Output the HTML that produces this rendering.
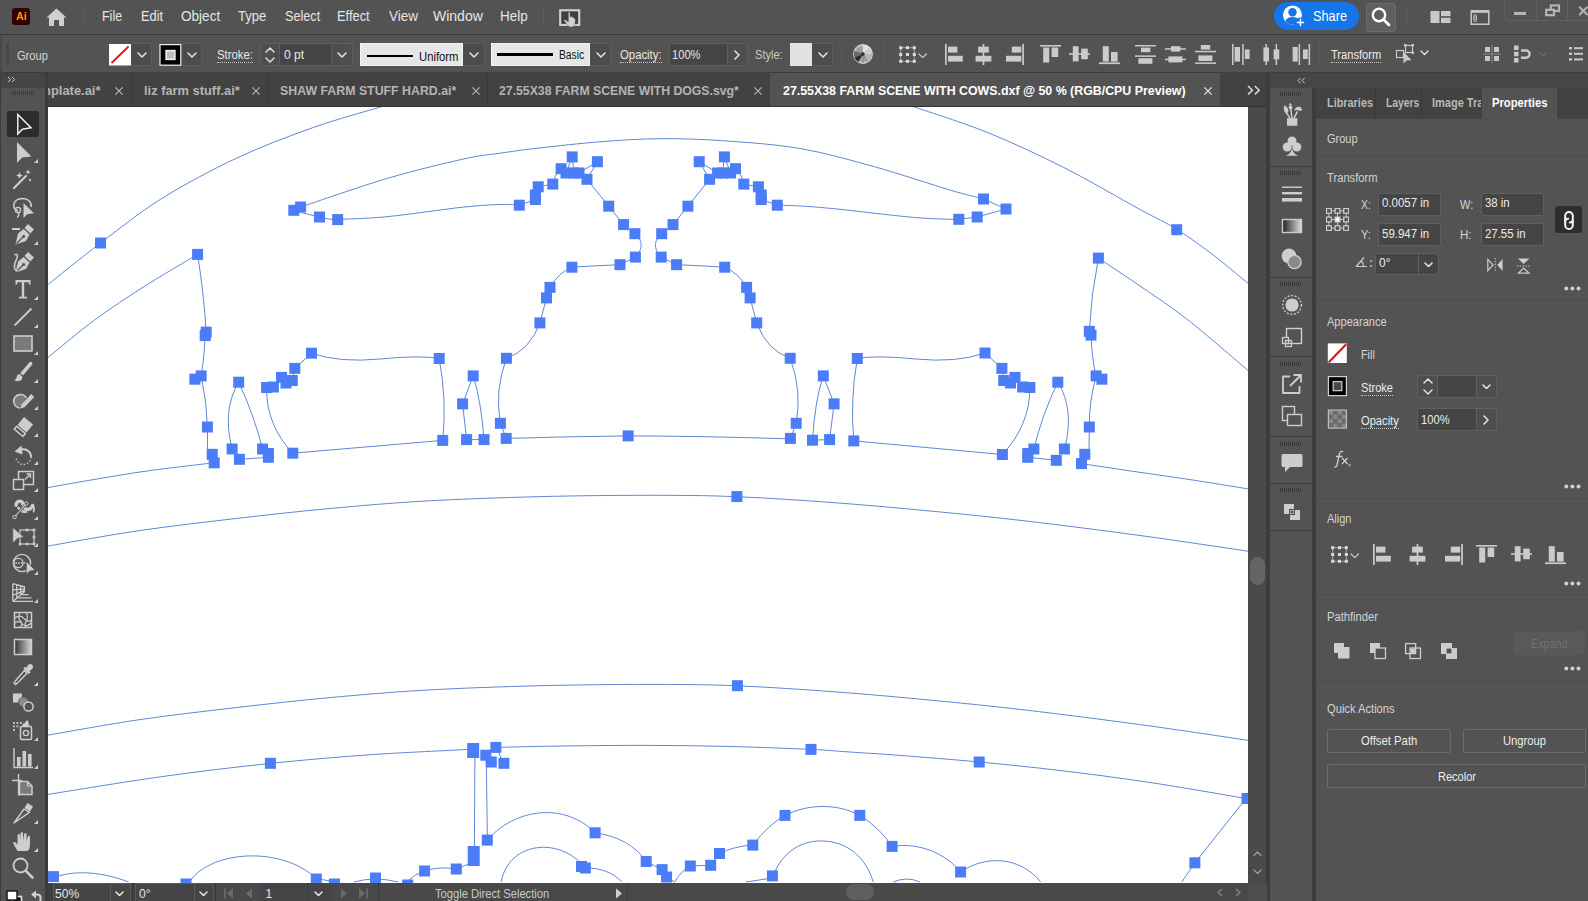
<!DOCTYPE html><html><head><meta charset="utf-8"><title>Illustrator</title><style>html,body{margin:0;padding:0;background:#535353;}
body{width:1588px;height:901px;overflow:hidden;position:relative;font-family:"Liberation Sans",sans-serif;}
.a{position:absolute;display:block;}
.t{white-space:nowrap;line-height:16px;}
</style></head><body><div class="a" style="left:48px;top:107px;width:1200px;height:776px;background:#ffffff;"></div><svg class="a" style="left:48px;top:107px" width="1200" height="776" viewBox="48 107 1200 776"><g fill="none" stroke="#5f86d6" stroke-width="1"><path d="M40.0,291.0 C41.3,289.9 37.9,292.5 48.0,284.5 C58.1,276.5 81.6,257.3 100.5,243.0 C119.4,228.7 138.6,213.0 161.3,198.8 C184.0,184.6 211.7,169.8 236.9,158.0 C262.1,146.2 288.5,136.3 312.4,127.8 C336.3,119.3 365.8,111.4 380.4,107.0 C395.0,102.6 396.7,102.4 400.0,101.5"/><path d="M895.0,101.0 C898.2,102.0 898.8,101.7 914.3,107.0 C929.8,112.3 963.1,122.6 988.0,132.7 C1012.9,142.8 1038.4,154.7 1063.6,167.4 C1088.8,180.1 1120.2,198.7 1139.1,209.0 C1158.0,219.3 1164.3,221.5 1176.9,229.4 C1189.5,237.3 1202.9,247.2 1214.7,256.2 C1226.5,265.2 1241.1,277.7 1248.0,283.3 C1254.9,288.9 1254.7,288.9 1256.0,290.0"/><path d="M40.0,364.5 C41.3,363.3 38.9,364.9 48.0,357.5 C57.1,350.1 78.4,331.9 94.6,320.0 C110.8,308.1 127.8,296.9 145.0,286.0 C162.2,275.1 188.8,259.7 197.6,254.4"/><path d="M1098.4,258.1 C1105.8,263.1 1128.1,277.7 1143.0,288.0 C1157.9,298.3 1170.5,306.3 1188.0,320.0 C1205.5,333.7 1236.7,360.8 1248.0,370.4 C1259.3,380.0 1254.7,376.3 1256.0,377.5"/><path d="M300.4,207.1 C315.0,202.3 360.8,186.2 388.0,178.2 C415.2,170.2 444.9,163.2 463.6,159.0 C482.3,154.8 487.4,155.0 500.0,153.2 C512.6,151.4 522.4,149.9 539.1,148.0 C555.8,146.1 579.9,143.4 600.0,141.8 C620.1,140.2 639.4,138.9 660.0,138.7 C680.6,138.5 700.3,139.2 723.6,140.8 C746.9,142.4 774.8,144.2 800.0,148.5 C825.2,152.8 849.7,159.9 874.7,166.8 C899.7,173.7 932.1,184.8 950.2,190.1 C968.3,195.4 977.8,197.4 983.3,198.9 L1006,209 L977.2,217 L958.8,219.3"/><path d="M293.8,210.3 L300.6,207"/><path d="M293.8,210.3 Q310,215 319.5,217 Q330,220 337.7,219.6  C346.2,218.9 367.0,218.7 388.0,216.6 C409.0,214.5 444.7,209.1 463.6,207.1 C482.5,205.1 492.0,204.8 501.3,204.5 C510.6,204.2 516.3,205.1 519.3,205.2"/><path d="M958.5,219.6 C950.8,219.2 932.7,219.1 912.4,217.3 C892.1,215.5 855.6,210.9 836.9,209.0 C818.2,207.1 809.9,206.6 800.0,206.0 C790.1,205.4 781.3,205.3 777.6,205.2"/><path d="M519.3,205.2 L535.4,199.5 L538.2,186.8 L552.8,184.1 Q555.29,172.7 561.1,168.7 L566,173 L572.2,156.9 L574,173 L579,173 L597.4,161.7 L587,179.3 L579,173 M587,179.3 L608.7,206.2 L623.6,224.6 L634.9,233.7 C642.9,240.7 643.4,248.10000000000002 635.4,257.1 L620,264.7 Q595.95,265.7 571.9,267.2 Q557.9,273.2 550,287.4 L546.5,297.9 L539.9,322.9 Q529.9,350.3 506.4,358.3 Q494.4,390.8 500.4,423.3 L506.2,438.4"/><path d="M777.3,205.2 L761.1999999999999,199.5 L758.3999999999999,186.8 L743.8,184.1 Q741.31,172.7 735.4999999999999,168.7 L730.5999999999999,173 L724.3999999999999,156.9 L722.5999999999999,173 L717.5999999999999,173 L699.1999999999999,161.7 L709.5999999999999,179.3 L717.5999999999999,173 M709.5999999999999,179.3 L687.8999999999999,206.2 L672.9999999999999,224.6 L661.6999999999999,233.7 C653.6999999999999,240.7 653.1999999999999,248.10000000000002 661.1999999999999,257.1 L676.5999999999999,264.7 Q700.6499999999999,265.7 724.6999999999999,267.2 Q738.6999999999999,273.2 746.5999999999999,287.4 L750.0999999999999,297.9 L756.6999999999999,322.9 Q766.6999999999999,350.3 790.1999999999999,358.3 Q802.1999999999999,390.8 796.1999999999999,423.3 L790.3999999999999,438.4"/><path d="M506.2,438.4 Q570,436.5 628.1,435.9 Q700,436 790.6,438.9"/><path d="M473.2,375.9 L462.6,403.9 L466.6,439.6 L484,439.6 Q481,400 473.2,375.9"/><path d="M823.3,375.9 L834.1,403.9 L829.6,439.6 L812.5,440.2 Q815,400 823.3,375.9"/><path d="M197.6,254.4 Q204,295 206.2,332.1 L205.2,335.6 Q204,360 201.1,375.9 L194.9,379.2 M201.1,375.9 Q207,402 207.4,427 L207.6,452 L212.2,454.3 L214.2,462.8"/><path d="M40.0,489.0 C41.3,488.8 31.3,490.3 48.0,487.5 C64.7,484.7 112.3,476.1 140.0,472.0 C167.7,467.9 201.8,464.3 214.2,462.8"/><path d="M238.7,382.2 Q222,410 232.1,449 L239.4,459.3 L268.4,457.3 L268.4,453.5 L262.6,449 Q254,415 238.7,382.2"/><path d="M266.6,387.5 Q266,425 292.8,453.2 L442.7,440.4 Q447,400 439.2,358.5 Q420,355 380,359 Q340,363 311.5,353.2 L294.8,368.4 L292.3,380.5 L286,383 L281.5,377.4 L273.4,387 L266.6,387.5"/><path d="M1098.4,258.1 Q1091,295 1089.3,331.3 L1091,335.1 Q1092,360 1096.1,375.9 L1101.9,379.2 M1096.1,375.9 Q1089,402 1089.3,427 L1089,452 L1084.8,454.3 L1081.5,463.6"/><path d="M1081.5,463.6 C1088.6,464.7 1106.6,467.4 1124.0,470.0 C1141.4,472.6 1165.3,475.9 1186.0,479.0 C1206.7,482.1 1236.3,487.0 1248.0,488.9 C1259.7,490.8 1254.7,490.1 1256.0,490.3"/><path d="M1057.8,382.2 Q1075,410 1064.4,449 M1057.8,382.2 Q1042,415 1033.9,449 L1027.8,453.5 L1027.8,457.3 L1056.3,460.3"/><path d="M1029.9,387.5 Q1030,425 1002.4,454.5 L853.8,440.9 Q850,400 857.3,358.5 Q876,355 916,359 Q956,363 985,353 L1001.9,368.4 L1003.7,380.5 L1010.5,383 L1015,377.4 L1022.6,387 L1029.9,387.5"/><path d="M40.0,547.5 C41.3,547.2 31.3,548.8 48.0,546.0 C64.7,543.2 108.5,535.1 140.0,530.5 C171.5,525.9 205.3,522.1 237.0,518.4 C268.7,514.7 298.5,511.4 330.0,508.5 C361.5,505.6 391.0,503.0 426.0,501.0 C461.0,499.0 503.0,497.6 540.0,496.6 C577.0,495.7 615.2,495.3 648.0,495.3 C680.8,495.3 705.5,495.4 737.0,496.7 C768.5,498.0 804.8,500.5 837.0,502.9 C869.2,505.3 898.5,508.0 930.0,511.0 C961.5,514.0 991.0,516.9 1026.0,521.0 C1061.0,525.1 1103.0,530.5 1140.0,535.5 C1177.0,540.5 1228.7,548.4 1248.0,551.2 C1267.3,554.0 1254.7,552.3 1256.0,552.5"/><path d="M40.0,736.6 C41.3,736.4 31.3,737.9 48.0,735.1 C64.7,732.3 108.5,724.2 140.0,719.6 C171.5,715.0 205.3,711.2 237.0,707.5 C268.7,703.8 298.5,700.5 330.0,697.6 C361.5,694.7 391.0,692.1 426.0,690.1 C461.0,688.1 503.0,686.7 540.0,685.7 C577.0,684.8 615.2,684.4 648.0,684.4 C680.8,684.4 705.5,684.5 737.0,685.8 C768.5,687.1 804.8,689.6 837.0,692.0 C869.2,694.4 898.5,697.1 930.0,700.1 C961.5,703.1 991.0,706.0 1026.0,710.1 C1061.0,714.2 1103.0,719.6 1140.0,724.6 C1177.0,729.6 1228.7,737.5 1248.0,740.3 C1267.3,743.1 1254.7,741.4 1256.0,741.6"/><path d="M40.0,795.8 C41.3,795.6 27.8,797.6 48.0,794.4 C68.2,791.2 124.2,781.9 161.3,776.7 C198.4,771.5 235.9,767.0 270.5,763.4 C305.1,759.8 336.3,757.1 369.1,754.8 C401.9,752.5 450.9,750.4 467.3,749.5"/><path d="M495.9,747.4 C508.2,747.1 544.4,746.2 570.0,745.9 C595.6,745.6 622.8,745.3 649.5,745.4 C676.2,745.5 703.1,745.8 730.0,746.5 C756.9,747.2 791.3,748.5 811.0,749.4 C830.7,750.3 833.2,750.9 848.0,751.9 C862.8,752.9 878.1,753.7 900.0,755.4 C921.9,757.1 952.5,759.5 979.2,762.0 C1005.9,764.5 1031.5,767.1 1060.0,770.5 C1088.5,773.9 1119.0,777.8 1150.0,782.5 C1181.0,787.2 1228.3,795.5 1246.0,798.5 C1263.7,801.5 1254.3,800.0 1256.0,800.3"/><path d="M474.9,758 L474.4,846 M486.3,760.8 L487.3,835 M495.9,747.4 L503.9,763.3"/><path d="M59,876 C75,871 100,871 128.6,882"/><path d="M190,881 C212,850 282,846 316.3,878.6 L334.4,881.7"/><path d="M354,882 Q375,876 398,882"/><path d="M407.7,881 Q415,874 424.6,871 Q440,866 456.3,869 L473.7,862"/><path d="M487.3,840.1 C515,808 565,802 595.1,832.8 C618,836 636,846 646.2,861.5 L662.1,869.6 L666.6,877 L674.7,882"/><path d="M501,882 C506,858 524,847.5 543.7,847.2 C560,847.5 575,855 585.3,868 C600,867.5 614,873 621.8,882"/><path d="M674.7,882 Q680,872 690.3,866 L710.7,865.3 L719.5,853.5 Q735,846 752.8,845.1 Q768,825 785,815.4 C808,803.5 838,803.5 859.8,815.4 Q880,828 892.1,846.4 C920,842 946,854 960.6,872 C985,855 1020,856 1040.7,882"/><path d="M746,882 L772.4,878 C780,855 798,841 820.8,840.9 C848,841 866,858 873.2,882"/><path d="M893.3,882 Q907,876 919.8,882"/><path d="M1246,798.5 L1194.9,862.8 L1181.8,882"/></g><g fill="#4a7df7"><rect x="95.0" y="237.5" width="11" height="11"/><rect x="1171.2" y="224.2" width="11" height="11"/><rect x="192.1" y="248.9" width="11" height="11"/><rect x="1092.9" y="252.6" width="11" height="11"/><rect x="288.3" y="204.8" width="11" height="11"/><rect x="295.1" y="201.5" width="11" height="11"/><rect x="314.0" y="211.5" width="11" height="11"/><rect x="332.2" y="214.1" width="11" height="11"/><rect x="978.0" y="193.5" width="11" height="11"/><rect x="1000.5" y="203.5" width="11" height="11"/><rect x="971.7" y="211.5" width="11" height="11"/><rect x="953.3" y="213.8" width="11" height="11"/><rect x="513.8" y="199.7" width="11" height="11"/><rect x="529.9" y="194.0" width="11" height="11"/><rect x="529.9" y="189.5" width="11" height="11"/><rect x="532.7" y="181.3" width="11" height="11"/><rect x="547.3" y="178.6" width="11" height="11"/><rect x="555.6" y="163.2" width="11" height="11"/><rect x="560.5" y="167.5" width="11" height="11"/><rect x="566.7" y="151.4" width="11" height="11"/><rect x="568.5" y="167.5" width="11" height="11"/><rect x="573.5" y="167.5" width="11" height="11"/><rect x="591.9" y="156.2" width="11" height="11"/><rect x="581.5" y="173.8" width="11" height="11"/><rect x="603.2" y="200.7" width="11" height="11"/><rect x="618.1" y="219.1" width="11" height="11"/><rect x="629.4" y="228.2" width="11" height="11"/><rect x="629.9" y="251.6" width="11" height="11"/><rect x="614.5" y="259.2" width="11" height="11"/><rect x="566.4" y="261.7" width="11" height="11"/><rect x="544.5" y="281.9" width="11" height="11"/><rect x="541.0" y="292.4" width="11" height="11"/><rect x="534.4" y="317.4" width="11" height="11"/><rect x="500.9" y="352.8" width="11" height="11"/><rect x="494.9" y="417.8" width="11" height="11"/><rect x="500.7" y="432.9" width="11" height="11"/><rect x="771.8" y="199.7" width="11" height="11"/><rect x="755.7" y="194.0" width="11" height="11"/><rect x="755.7" y="189.5" width="11" height="11"/><rect x="752.9" y="181.3" width="11" height="11"/><rect x="738.3" y="178.6" width="11" height="11"/><rect x="730.0" y="163.2" width="11" height="11"/><rect x="725.1" y="167.5" width="11" height="11"/><rect x="718.9" y="151.4" width="11" height="11"/><rect x="717.1" y="167.5" width="11" height="11"/><rect x="712.1" y="167.5" width="11" height="11"/><rect x="693.7" y="156.2" width="11" height="11"/><rect x="704.1" y="173.8" width="11" height="11"/><rect x="682.4" y="200.7" width="11" height="11"/><rect x="667.5" y="219.1" width="11" height="11"/><rect x="656.2" y="228.2" width="11" height="11"/><rect x="655.7" y="251.6" width="11" height="11"/><rect x="671.1" y="259.2" width="11" height="11"/><rect x="719.2" y="261.7" width="11" height="11"/><rect x="741.1" y="281.9" width="11" height="11"/><rect x="744.6" y="292.4" width="11" height="11"/><rect x="751.2" y="317.4" width="11" height="11"/><rect x="784.7" y="352.8" width="11" height="11"/><rect x="790.7" y="417.8" width="11" height="11"/><rect x="784.9" y="432.9" width="11" height="11"/><rect x="622.6" y="430.4" width="11" height="11"/><rect x="467.7" y="370.4" width="11" height="11"/><rect x="457.1" y="398.4" width="11" height="11"/><rect x="461.1" y="434.1" width="11" height="11"/><rect x="478.5" y="434.1" width="11" height="11"/><rect x="817.8" y="370.4" width="11" height="11"/><rect x="828.6" y="398.4" width="11" height="11"/><rect x="824.1" y="434.1" width="11" height="11"/><rect x="807.0" y="434.7" width="11" height="11"/><rect x="200.7" y="326.6" width="11" height="11"/><rect x="199.7" y="330.1" width="11" height="11"/><rect x="189.4" y="373.7" width="11" height="11"/><rect x="195.6" y="370.4" width="11" height="11"/><rect x="201.9" y="421.5" width="11" height="11"/><rect x="206.7" y="448.8" width="11" height="11"/><rect x="208.7" y="457.3" width="11" height="11"/><rect x="233.2" y="376.7" width="11" height="11"/><rect x="226.6" y="443.5" width="11" height="11"/><rect x="233.9" y="453.8" width="11" height="11"/><rect x="262.9" y="451.8" width="11" height="11"/><rect x="262.9" y="448.0" width="11" height="11"/><rect x="257.1" y="443.5" width="11" height="11"/><rect x="261.1" y="382.0" width="11" height="11"/><rect x="267.9" y="381.5" width="11" height="11"/><rect x="276.0" y="371.9" width="11" height="11"/><rect x="280.5" y="377.5" width="11" height="11"/><rect x="286.8" y="375.0" width="11" height="11"/><rect x="289.3" y="362.9" width="11" height="11"/><rect x="306.0" y="347.7" width="11" height="11"/><rect x="433.7" y="353.0" width="11" height="11"/><rect x="437.2" y="434.9" width="11" height="11"/><rect x="287.3" y="447.7" width="11" height="11"/><rect x="1083.8" y="325.8" width="11" height="11"/><rect x="1085.5" y="329.6" width="11" height="11"/><rect x="1090.6" y="370.4" width="11" height="11"/><rect x="1096.4" y="373.7" width="11" height="11"/><rect x="1083.8" y="421.5" width="11" height="11"/><rect x="1079.3" y="448.8" width="11" height="11"/><rect x="1076.0" y="458.1" width="11" height="11"/><rect x="1052.3" y="376.7" width="11" height="11"/><rect x="1058.9" y="443.5" width="11" height="11"/><rect x="1028.4" y="443.5" width="11" height="11"/><rect x="1022.3" y="448.0" width="11" height="11"/><rect x="1022.3" y="451.8" width="11" height="11"/><rect x="1050.8" y="454.8" width="11" height="11"/><rect x="1024.4" y="382.0" width="11" height="11"/><rect x="1017.1" y="381.5" width="11" height="11"/><rect x="1009.5" y="371.9" width="11" height="11"/><rect x="1005.0" y="377.5" width="11" height="11"/><rect x="998.2" y="375.0" width="11" height="11"/><rect x="996.4" y="362.9" width="11" height="11"/><rect x="979.5" y="347.5" width="11" height="11"/><rect x="851.8" y="353.0" width="11" height="11"/><rect x="848.3" y="435.4" width="11" height="11"/><rect x="996.9" y="449.0" width="11" height="11"/><rect x="731.4" y="491.1" width="11" height="11"/><rect x="731.9" y="680.2" width="11" height="11"/><rect x="264.9" y="757.8" width="11" height="11"/><rect x="490.4" y="741.9" width="11" height="11"/><rect x="480.3" y="749.7" width="11" height="11"/><rect x="485.8" y="756.5" width="11" height="11"/><rect x="498.4" y="757.8" width="11" height="11"/><rect x="805.5" y="743.9" width="11" height="11"/><rect x="973.7" y="756.5" width="11" height="11"/><rect x="467.2" y="743.0" width="12" height="15"/><rect x="467.7" y="846.0" width="12" height="20"/><rect x="48.0" y="871.1" width="11" height="11"/><rect x="180.5" y="878.5" width="11" height="11"/><rect x="310.8" y="873.5" width="11" height="11"/><rect x="328.9" y="878.5" width="11" height="11"/><rect x="370.0" y="872.5" width="11" height="11"/><rect x="402.2" y="879.5" width="11" height="11"/><rect x="419.1" y="865.5" width="11" height="11"/><rect x="450.8" y="863.5" width="11" height="11"/><rect x="481.8" y="834.6" width="11" height="11"/><rect x="589.6" y="827.3" width="11" height="11"/><rect x="640.7" y="856.0" width="11" height="11"/><rect x="656.6" y="864.1" width="11" height="11"/><rect x="661.1" y="871.5" width="11" height="11"/><rect x="576.0" y="861.0" width="11" height="11"/><rect x="579.8" y="862.5" width="11" height="11"/><rect x="684.8" y="860.5" width="11" height="11"/><rect x="705.2" y="859.8" width="11" height="11"/><rect x="714.0" y="848.0" width="11" height="11"/><rect x="747.3" y="839.6" width="11" height="11"/><rect x="779.5" y="809.9" width="11" height="11"/><rect x="766.9" y="870.4" width="11" height="11"/><rect x="854.3" y="809.9" width="11" height="11"/><rect x="886.6" y="840.9" width="11" height="11"/><rect x="955.1" y="866.5" width="11" height="11"/><rect x="1189.4" y="857.3" width="11" height="11"/><rect x="1241.5" y="793.0" width="11" height="11"/></g></svg><div class="a" style="left:0px;top:0px;width:1588px;height:34px;background:#535353;"></div><div class="a" style="left:0px;top:34px;width:1588px;height:1px;background:#3c3c3c;"></div><div class="a" style="left:12px;top:8px;width:18px;height:17px;background:#330000;border-radius:3px;"></div><div class="a t" style="left:15.6px;top:7.800000000000001px;font-size:10.5px;color:#ff9a00;font-weight:bold;transform:scaleX(1.0095);transform-origin:0 0;">Ai</div><svg class="a" style="left:46px;top:8px;" width="21" height="19" viewBox="0 0 21 19"><path d="M10.5,0.5 L0.5,9.5 L3,9.5 L3,18 L8,18 L8,12 L13,12 L13,18 L18,18 L18,9.5 L20.5,9.5 Z" fill="#cfcfcf"/></svg><div class="a" style="left:83px;top:6px;width:1px;height:21px;background:#5e5e5e;"></div><div class="a t" style="left:102.3px;top:7.5px;font-size:14.5px;color:#e6e6e6;transform:scaleX(0.8599);transform-origin:0 0;">File</div><div class="a t" style="left:140.6px;top:7.5px;font-size:14.5px;color:#e6e6e6;transform:scaleX(0.8840);transform-origin:0 0;">Edit</div><div class="a t" style="left:180.7px;top:7.5px;font-size:14.5px;color:#e6e6e6;transform:scaleX(0.9351);transform-origin:0 0;">Object</div><div class="a t" style="left:238.4px;top:7.5px;font-size:14.5px;color:#e6e6e6;transform:scaleX(0.9034);transform-origin:0 0;">Type</div><div class="a t" style="left:284.5px;top:7.5px;font-size:14.5px;color:#e6e6e6;transform:scaleX(0.8732);transform-origin:0 0;">Select</div><div class="a t" style="left:337.4px;top:7.5px;font-size:14.5px;color:#e6e6e6;transform:scaleX(0.8883);transform-origin:0 0;">Effect</div><div class="a t" style="left:388.5px;top:7.5px;font-size:14.5px;color:#e6e6e6;transform:scaleX(0.9303);transform-origin:0 0;">View</div><div class="a t" style="left:433.2px;top:7.5px;font-size:14.5px;color:#e6e6e6;transform:scaleX(0.9655);transform-origin:0 0;">Window</div><div class="a t" style="left:500.3px;top:7.5px;font-size:14.5px;color:#e6e6e6;transform:scaleX(0.9287);transform-origin:0 0;">Help</div><div class="a" style="left:543px;top:6px;width:1px;height:21px;background:#5e5e5e;"></div><svg class="a" style="left:558px;top:7.5px;" width="24" height="20" viewBox="0 0 24 20"><rect x="2.2" y="2.3" width="19" height="14.6" fill="#3e3e3e" stroke="#d2d2d2" stroke-width="2.1"/><path d="M10.3,4.8 q0.9,-1.4 1.8,0 V9.2 l0.9,-0.9 q1.1,-0.4 1.4,0.7 l0.2,0.6 q1,-0.6 1.5,0.4 l0.2,0.8 q0.9,-0.4 1.3,0.5 l-1,5.6 q-1.2,2.3 -3.5,2.3 q-1.7,0 -2.7,-1.1 L5.8,12.6 q0.5,-1.5 1.9,-0.5 L10.3,14 Z" fill="#d2d2d2" stroke="#535353" stroke-width="0.5"/></svg><div class="a" style="left:1274px;top:1.7px;width:84.5px;height:28px;background:#1675e8;border-radius:14px;"></div><svg class="a" style="left:1282px;top:4.2px;" width="24" height="24" viewBox="0 0 24 24"><circle cx="10.5" cy="11" r="9.5" fill="#fff"/><circle cx="10.5" cy="8.3" r="4.2" fill="#1675e8"/><path d="M3.4,17.5 q1,-4.6 7.1,-4.6 q6.1,0 7.1,4.6 q-3,3 -7.1,3 q-4.1,0 -7.1,-3Z" fill="#1675e8"/><circle cx="18.5" cy="18.5" r="5" fill="#1675e8"/><path d="M18.5,14.8 v7.4 M14.8,18.5 h7.4" stroke="#fff" stroke-width="1.4"/></svg><div class="a t" style="left:1313.3px;top:7.800000000000001px;font-size:14.5px;color:#ffffff;transform:scaleX(0.8785);transform-origin:0 0;">Share</div><div class="a" style="left:1366px;top:2.5px;width:29.5px;height:29px;background:#5f5f5f;border:1px solid #6c6c6c;border-radius:3px;box-sizing:border-box;"></div><svg class="a" style="left:1370px;top:6px;" width="22" height="22" viewBox="0 0 22 22"><circle cx="9" cy="9" r="6.2" fill="none" stroke="#fff" stroke-width="2.4"/><path d="M13.8,13.8 L19,19" stroke="#fff" stroke-width="2.8" stroke-linecap="round"/></svg><div class="a" style="left:1406px;top:6px;width:1px;height:21px;background:#5e5e5e;"></div><svg class="a" style="left:1430px;top:10px;" width="22" height="14" viewBox="0 0 22 14"><rect x="0.5" y="1" width="9" height="12" fill="#c8c8c8"/><rect x="11" y="1" width="9.5" height="5.2" fill="#c8c8c8"/><rect x="11" y="7.8" width="9.5" height="5.2" fill="#c8c8c8"/></svg><svg class="a" style="left:1470px;top:9px;" width="21" height="17" viewBox="0 0 21 17"><rect x="1.2" y="1.8" width="17.6" height="13.4" fill="none" stroke="#c8c8c8" stroke-width="1.5"/><rect x="1.2" y="1.6" width="17.6" height="2.2" fill="#c8c8c8"/><rect x="3.8" y="5.6" width="2.6" height="7" rx="1.2" fill="none" stroke="#c8c8c8" stroke-width="1"/><path d="M3.8,8 h2.6 M3.8,10.2 h2.6" stroke="#c8c8c8" stroke-width="0.8"/></svg><div class="a" style="left:1504px;top:-2px;width:90px;height:23px;border:1px solid #606060;border-radius:3px;box-sizing:border-box;"></div><div class="a" style="left:1536px;top:0px;width:1px;height:20px;background:#606060;"></div><div class="a" style="left:1567px;top:0px;width:1px;height:20px;background:#606060;"></div><div class="a" style="left:1514px;top:12px;width:12px;height:3px;background:#b4b4b4;"></div><svg class="a" style="left:1544px;top:3px;" width="18" height="15" viewBox="0 0 18 15"><rect x="6.8" y="2.4" width="8.2" height="5.6" fill="none" stroke="#b4b4b4" stroke-width="2.2"/><rect x="2.2" y="6.8" width="7.8" height="5.4" fill="#535353" stroke="#b4b4b4" stroke-width="2.2"/></svg><svg class="a" style="left:1577px;top:4px;" width="14" height="14" viewBox="0 0 14 14"><path d="M2.2,2.8 L10.6,11 M10.6,2.8 L2.2,11" stroke="#b4b4b4" stroke-width="2"/></svg><div class="a" style="left:0px;top:35px;width:1588px;height:37px;background:#535353;"></div><div class="a" style="left:0px;top:72px;width:1588px;height:1px;background:#3c3c3c;"></div><div class="a" style="left:0px;top:35px;width:2px;height:38px;background:#484848;"></div><svg class="a" style="left:6px;top:43px;" width="3" height="23" viewBox="0 0 3 23"><rect x="0" y="0" width="3" height="1" fill="#3e3e3e"/><rect x="0" y="2" width="3" height="1" fill="#3e3e3e"/><rect x="0" y="4" width="3" height="1" fill="#3e3e3e"/><rect x="0" y="6" width="3" height="1" fill="#3e3e3e"/><rect x="0" y="8" width="3" height="1" fill="#3e3e3e"/><rect x="0" y="10" width="3" height="1" fill="#3e3e3e"/><rect x="0" y="12" width="3" height="1" fill="#3e3e3e"/><rect x="0" y="14" width="3" height="1" fill="#3e3e3e"/><rect x="0" y="16" width="3" height="1" fill="#3e3e3e"/><rect x="0" y="18" width="3" height="1" fill="#3e3e3e"/><rect x="0" y="20" width="3" height="1" fill="#3e3e3e"/><rect x="0" y="22" width="3" height="1" fill="#3e3e3e"/></svg><div class="a t" style="left:17px;top:48.1px;font-size:12px;color:#d4d4d4;transform:scaleX(0.9233);transform-origin:0 0;">Group</div><div class="a" style="left:131px;top:43px;width:21px;height:23px;background:#4c4c4c;border:1px solid #5c5c5c;border-left:none;box-sizing:border-box;border-radius:0 2px 2px 0;"></div><svg class="a" style="left:109px;top:44px;" width="22" height="22" viewBox="0 0 22 22"><rect x="0" y="0" width="22" height="21.5" fill="#fff"/><path d="M2.5,19 L19.5,2.5" stroke="#e0141c" stroke-width="1.8"/></svg><svg class="a" style="left:136.5px;top:52.0px;" width="10" height="6" viewBox="0 0 10 6"><polyline points="1,1 5.0,5 9,1" fill="none" stroke="#e0e0e0" stroke-width="1.6" stroke-linecap="round" stroke-linejoin="round"/></svg><div class="a" style="left:181px;top:43px;width:21px;height:23px;background:#4c4c4c;border:1px solid #5c5c5c;border-left:none;box-sizing:border-box;border-radius:0 2px 2px 0;"></div><svg class="a" style="left:159px;top:44px;" width="23" height="22" viewBox="0 0 23 22"><rect x="1" y="0.6" width="20.8" height="20.6" fill="#000" stroke="#f0f0f0" stroke-width="1.2"/><rect x="7.1" y="6.6" width="8.8" height="8.8" fill="#bdbdbd" stroke="#f4f4f4" stroke-width="1.5"/></svg><svg class="a" style="left:187.0px;top:52.0px;" width="10" height="6" viewBox="0 0 10 6"><polyline points="1,1 5.0,5 9,1" fill="none" stroke="#e0e0e0" stroke-width="1.6" stroke-linecap="round" stroke-linejoin="round"/></svg><div class="a t" style="left:217px;top:47.2px;font-size:12.5px;color:#e6e6e6;transform:scaleX(0.9089);transform-origin:0 0;">Stroke:</div><div class="a" style="left:217px;top:62.2px;width:36px;height:0;border-top:1px dotted #c8c8c8;"></div><div class="a" style="left:260px;top:43px;width:93px;height:23px;background:#454545;border:1px solid #5e5e5e;box-sizing:border-box;border-radius:2px;"></div><div class="a" style="left:260px;top:43px;width:20px;height:23px;background:#4e4e4e;border:1px solid #5e5e5e;box-sizing:border-box;border-radius:2px 0 0 2px;"></div><div class="a" style="left:331px;top:43px;width:22px;height:23px;background:#4e4e4e;border:1px solid #5e5e5e;box-sizing:border-box;border-radius:0 2px 2px 0;"></div><svg class="a" style="left:265.3px;top:46.6px;" width="10" height="6" viewBox="0 0 10 6"><polyline points="1,5 5.0,1 9,5" fill="none" stroke="#e0e0e0" stroke-width="1.5" stroke-linecap="round" stroke-linejoin="round"/></svg><svg class="a" style="left:265.3px;top:57.4px;" width="10" height="6" viewBox="0 0 10 6"><polyline points="1,1 5.0,5 9,1" fill="none" stroke="#e0e0e0" stroke-width="1.5" stroke-linecap="round" stroke-linejoin="round"/></svg><div class="a t" style="left:283.7px;top:47px;font-size:12px;color:#e6e6e6;transform:scaleX(1.0092);transform-origin:0 0;">0 pt</div><svg class="a" style="left:336.5px;top:52.0px;" width="10" height="6" viewBox="0 0 10 6"><polyline points="1,1 5.0,5 9,1" fill="none" stroke="#e0e0e0" stroke-width="1.6" stroke-linecap="round" stroke-linejoin="round"/></svg><div class="a" style="left:360px;top:43px;width:103px;height:23px;background:#e6e6e6;border:1px solid #f4f4f4;box-sizing:border-box;"></div><div class="a" style="left:367px;top:55px;width:46px;height:2px;background:#000;"></div><div class="a t" style="left:418.7px;top:49px;font-size:12px;color:#111;transform:scaleX(0.9401);transform-origin:0 0;">Uniform</div><div class="a" style="left:463px;top:43px;width:22px;height:23px;background:#4c4c4c;border:1px solid #5c5c5c;border-left:none;box-sizing:border-box;border-radius:0 2px 2px 0;"></div><svg class="a" style="left:469.0px;top:52.0px;" width="10" height="6" viewBox="0 0 10 6"><polyline points="1,1 5.0,5 9,1" fill="none" stroke="#e0e0e0" stroke-width="1.6" stroke-linecap="round" stroke-linejoin="round"/></svg><div class="a" style="left:491px;top:43px;width:99.3px;height:23px;background:#e6e6e6;border:1px solid #f4f4f4;box-sizing:border-box;"></div><div class="a" style="left:497px;top:53px;width:56px;height:3px;background:#000;"></div><div class="a t" style="left:559px;top:47.4px;font-size:12px;color:#111;transform:scaleX(0.8588);transform-origin:0 0;">Basic</div><div class="a" style="left:590.3px;top:43px;width:21.2px;height:23px;background:#4c4c4c;border:1px solid #5c5c5c;border-left:none;box-sizing:border-box;border-radius:0 2px 2px 0;"></div><svg class="a" style="left:596.3px;top:52.0px;" width="10" height="6" viewBox="0 0 10 6"><polyline points="1,1 5.0,5 9,1" fill="none" stroke="#e0e0e0" stroke-width="1.6" stroke-linecap="round" stroke-linejoin="round"/></svg><div class="a t" style="left:620.3px;top:46.6px;font-size:12.5px;color:#e6e6e6;transform:scaleX(0.9071);transform-origin:0 0;">Opacity:</div><div class="a" style="left:620.3px;top:61.6px;width:41.6px;height:0;border-top:1px dotted #c8c8c8;"></div><div class="a" style="left:669px;top:43px;width:79px;height:23px;background:#454545;border:1px solid #5e5e5e;box-sizing:border-box;border-radius:2px;"></div><div class="a" style="left:727px;top:43px;width:21px;height:23px;background:#4e4e4e;border:1px solid #5e5e5e;box-sizing:border-box;border-radius:0 2px 2px 0;"></div><div class="a t" style="left:672.4px;top:47px;font-size:12px;color:#e6e6e6;transform:scaleX(0.9282);transform-origin:0 0;">100%</div><svg class="a" style="left:734.0px;top:50.0px;" width="6" height="10" viewBox="0 0 6 10"><polyline points="1,1 5,5.0 1,9" fill="none" stroke="#e0e0e0" stroke-width="1.6" stroke-linecap="round" stroke-linejoin="round"/></svg><div class="a t" style="left:754.6px;top:46.6px;font-size:12.5px;color:#c8c8c8;transform:scaleX(0.8860);transform-origin:0 0;">Style:</div><div class="a" style="left:790px;top:43px;width:22px;height:23px;background:#e2e2e2;"></div><div class="a" style="left:812px;top:43px;width:21px;height:23px;background:#4c4c4c;border:1px solid #5c5c5c;border-left:none;box-sizing:border-box;border-radius:0 2px 2px 0;"></div><svg class="a" style="left:817.5px;top:52.0px;" width="10" height="6" viewBox="0 0 10 6"><polyline points="1,1 5.0,5 9,1" fill="none" stroke="#e0e0e0" stroke-width="1.6" stroke-linecap="round" stroke-linejoin="round"/></svg><div class="a" style="left:841px;top:41px;width:1px;height:27px;background:#595959;"></div><svg class="a" style="left:852px;top:43.3px;" width="22" height="22" viewBox="0 0 22 22"><circle cx="11" cy="11" r="9.2" fill="#a4a4a4" stroke="#d4d4d4" stroke-width="1.4"/><path d="M11,11 L11,1.8 A9.2,9.2 0 0 1 17.5,4.5Z" fill="#e2e2e2"/><path d="M11,11 L17.5,4.5 A9.2,9.2 0 0 1 20.2,11Z" fill="#cdcdcd"/><path d="M11,11 L20.2,11 A9.2,9.2 0 0 1 15.6,19Z" fill="#b4b4b4"/><path d="M11,11 L6.4,19 A9.2,9.2 0 0 1 2.4,14.2Z" fill="#2c2c2c"/><path d="M11,11 L2.4,14.2 A9.2,9.2 0 0 1 2.4,7.8Z" fill="#6a6a6a"/><path d="M11,11 L11,20.2 M11,11 L4.5,4.5 M11,11 L15.6,19" stroke="#777" stroke-width="0.7"/><circle cx="11" cy="11" r="1.7" fill="#2a2a2a"/></svg><div class="a" style="left:884px;top:41px;width:1px;height:27px;background:#595959;"></div><svg class="a" style="left:899px;top:46px;" width="17" height="17" viewBox="0 0 17 17"><rect x="1.7" y="1.7" width="13.6" height="13.6" fill="none" stroke="#a8a8a8" stroke-width="1"/><rect x="0.19999999999999996" y="0.19999999999999996" width="3" height="3" fill="#dcdcdc"/><rect x="7.0" y="0.19999999999999996" width="3" height="3" fill="#dcdcdc"/><rect x="13.8" y="0.19999999999999996" width="3" height="3" fill="#dcdcdc"/><rect x="0.19999999999999996" y="7.0" width="3" height="3" fill="#dcdcdc"/><rect x="13.8" y="7.0" width="3" height="3" fill="#dcdcdc"/><rect x="0.19999999999999996" y="13.8" width="3" height="3" fill="#dcdcdc"/><rect x="7.0" y="13.8" width="3" height="3" fill="#dcdcdc"/><rect x="13.8" y="13.8" width="3" height="3" fill="#dcdcdc"/><rect x="7.0" y="7.0" width="3" height="3" fill="#dcdcdc"/></svg><svg class="a" style="left:917.5px;top:52.6px;" width="9.4" height="5.6" viewBox="0 0 9.4 5.6"><polyline points="1,1 4.7,4.6 8.4,1" fill="none" stroke="#d0d0d0" stroke-width="1.2" stroke-linecap="round" stroke-linejoin="round"/></svg><svg class="a" style="left:945.2px;top:43.8px;" width="21" height="21" viewBox="0 0 21 21"><rect x="0" y="0" width="1.7" height="21" fill="#cbcbcb"/><rect x="3" y="2.6" width="9.4" height="6" fill="#cbcbcb"/><rect x="3" y="11.8" width="14.8" height="5.8" fill="#cbcbcb"/></svg><svg class="a" style="left:973.4px;top:43.8px;" width="21" height="21" viewBox="0 0 21 21"><rect x="9.6" y="0" width="1.7" height="21" fill="#cbcbcb"/><rect x="5.1" y="2.6" width="10.7" height="6" fill="#cbcbcb"/><rect x="2.6" y="11.8" width="15.8" height="5.8" fill="#cbcbcb"/></svg><svg class="a" style="left:1003.2px;top:43.8px;" width="21" height="21" viewBox="0 0 21 21"><rect x="19.2" y="0" width="1.7" height="21" fill="#cbcbcb"/><rect x="8.8" y="2.6" width="9.4" height="6" fill="#cbcbcb"/><rect x="3" y="11.8" width="15.2" height="5.8" fill="#cbcbcb"/></svg><svg class="a" style="left:1039.6px;top:43.8px;" width="21" height="21" viewBox="0 0 21 21"><rect x="0" y="1" width="21" height="1.6" fill="#cbcbcb"/><rect x="3.2" y="3.5" width="6" height="15" fill="#cbcbcb"/><rect x="11.6" y="3.5" width="6.6" height="9.5" fill="#cbcbcb"/></svg><svg class="a" style="left:1069.2px;top:43.8px;" width="21" height="21" viewBox="0 0 21 21"><rect x="0" y="9.2" width="21" height="1.6" fill="#cbcbcb"/><rect x="3.8" y="2.2" width="5.8" height="15.2" fill="#cbcbcb"/><rect x="12.2" y="4.6" width="6.6" height="10.6" fill="#cbcbcb"/></svg><svg class="a" style="left:1099.4px;top:43.8px;" width="21" height="21" viewBox="0 0 21 21"><rect x="0" y="18.4" width="21" height="1.7" fill="#cbcbcb"/><rect x="3.8" y="2.2" width="6" height="15.4" fill="#cbcbcb"/><rect x="12" y="8" width="6.6" height="9.6" fill="#cbcbcb"/></svg><svg class="a" style="left:1134.8px;top:43.8px;" width="21" height="21" viewBox="0 0 21 21"><rect x="0" y="1" width="21" height="1.5" fill="#cbcbcb"/><rect x="6" y="3.6" width="9.4" height="4.6" fill="#cbcbcb"/><rect x="0" y="11.4" width="21" height="1.5" fill="#cbcbcb"/><rect x="3.4" y="14.2" width="14" height="5.6" fill="#cbcbcb"/></svg><svg class="a" style="left:1164.8px;top:43.8px;" width="21" height="21" viewBox="0 0 21 21"><rect x="0" y="4.2" width="21" height="1.5" fill="#cbcbcb"/><rect x="6" y="2.2" width="9.4" height="5.4" fill="#cbcbcb"/><rect x="0" y="14.7" width="21" height="1.5" fill="#cbcbcb"/><rect x="3.4" y="12.4" width="14" height="6" fill="#cbcbcb"/></svg><svg class="a" style="left:1194.6px;top:43.8px;" width="21" height="21" viewBox="0 0 21 21"><rect x="0" y="6.8" width="21" height="1.5" fill="#cbcbcb"/><rect x="5.8" y="1" width="9.4" height="4.6" fill="#cbcbcb"/><rect x="0" y="18.4" width="21" height="1.5" fill="#cbcbcb"/><rect x="3.4" y="11.4" width="14" height="5.6" fill="#cbcbcb"/></svg><svg class="a" style="left:1231px;top:43.8px;" width="21" height="21" viewBox="0 0 21 21"><rect x="1" y="0" width="1.5" height="21" fill="#cbcbcb"/><rect x="3.6" y="3" width="5.4" height="14.6" fill="#cbcbcb"/><rect x="11.2" y="0" width="1.5" height="21" fill="#cbcbcb"/><rect x="13.8" y="5.4" width="4.8" height="9.6" fill="#cbcbcb"/></svg><svg class="a" style="left:1261px;top:43.8px;" width="21" height="21" viewBox="0 0 21 21"><rect x="4.4" y="0" width="1.5" height="21" fill="#cbcbcb"/><rect x="2.4" y="3.4" width="5.6" height="14" fill="#cbcbcb"/><rect x="14.6" y="0" width="1.5" height="21" fill="#cbcbcb"/><rect x="12.6" y="5.4" width="5.6" height="10" fill="#cbcbcb"/></svg><svg class="a" style="left:1290.6px;top:43.8px;" width="21" height="21" viewBox="0 0 21 21"><rect x="7.6" y="0" width="1.5" height="21" fill="#cbcbcb"/><rect x="1.6" y="3" width="5.2" height="14.6" fill="#cbcbcb"/><rect x="17.6" y="0" width="1.5" height="21" fill="#cbcbcb"/><rect x="12" y="5.4" width="4.8" height="9.6" fill="#cbcbcb"/></svg><div class="a" style="left:1319px;top:41px;width:1px;height:27px;background:#595959;"></div><div class="a t" style="left:1331.3px;top:46.6px;font-size:12.5px;color:#ececec;transform:scaleX(0.8885);transform-origin:0 0;">Transform</div><div class="a" style="left:1331.3px;top:61.6px;width:50.2px;height:0;border-top:1px dotted #c8c8c8;"></div><svg class="a" style="left:1394px;top:44px;" width="22" height="22" viewBox="0 0 22 22"><rect x="2.5" y="6.5" width="7" height="7" fill="none" stroke="#c8c8c8" stroke-width="1.2"/><rect x="11.5" y="1.5" width="7" height="7" fill="none" stroke="#c8c8c8" stroke-width="1.2"/><rect x="10" y="0" width="2.4" height="2.4" fill="#c8c8c8"/><rect x="17.6" y="0" width="2.4" height="2.4" fill="#c8c8c8"/><rect x="17.6" y="7.6" width="2.4" height="2.4" fill="#c8c8c8"/><path d="M9.5,7.5 L9.5,19.5 L12.5,16.5 L17.5,16.2 Z" fill="#c8c8c8"/></svg><svg class="a" style="left:1419.5px;top:50.25px;" width="9" height="5.5" viewBox="0 0 9 5.5"><polyline points="1,1 4.5,4.5 8,1" fill="none" stroke="#e6e6e6" stroke-width="1.4" stroke-linecap="round" stroke-linejoin="round"/></svg><svg class="a" style="left:1483px;top:45px;" width="18" height="18" viewBox="0 0 18 18"><path d="M9,0 V18 M0,9 H18" stroke="#8c8c8c" stroke-width="1"/><rect x="2" y="2" width="5" height="5" fill="#c8c8c8"/><rect x="11" y="2" width="5" height="5" fill="#c8c8c8"/><rect x="2" y="11" width="5" height="5" fill="#c8c8c8"/><rect x="11" y="11" width="5" height="5" fill="#c8c8c8"/></svg><svg class="a" style="left:1513px;top:45px;" width="20" height="18" viewBox="0 0 20 18"><rect x="1" y="0.5" width="4.5" height="4.5" fill="#c8c8c8"/><rect x="1" y="6.8" width="4.5" height="4.5" fill="#c8c8c8"/><rect x="1" y="13" width="4.5" height="4.5" fill="#c8c8c8"/><path d="M8,5.5 H13 a3.6,3.6 0 0 1 0,7.2 H8" fill="none" stroke="#c8c8c8" stroke-width="2.4"/></svg><svg class="a" style="left:1539.0px;top:51.5px;" width="8" height="5" viewBox="0 0 8 5"><polyline points="1,1 4.0,4 7,1" fill="none" stroke="#6c6c6c" stroke-width="1.2" stroke-linecap="round" stroke-linejoin="round"/></svg><svg class="a" style="left:1569px;top:46px;" width="19" height="16" viewBox="0 0 19 16"><rect x="0" y="1" width="3" height="2.4" fill="#c8c8c8"/><rect x="0" y="6.6" width="3" height="2.4" fill="#c8c8c8"/><rect x="0" y="12.2" width="3" height="2.4" fill="#c8c8c8"/><rect x="5" y="1.2" width="9" height="2" fill="#c8c8c8"/><rect x="5" y="6.8" width="9" height="2" fill="#c8c8c8"/><rect x="5" y="12.4" width="9" height="2" fill="#c8c8c8"/></svg><div class="a" style="left:0px;top:73px;width:1588px;height:34px;background:#424242;"></div><div class="a" style="left:48px;top:106px;width:1220px;height:1px;background:#323232;"></div><div class="a" style="left:770px;top:73px;width:450px;height:33px;background:#535353;"></div><div class="a t" style="left:43.2px;top:83.1px;font-size:13px;color:#b4b4b4;font-weight:bold;transform:scaleX(0.9949);transform-origin:0 0;">nplate.ai*</div><svg class="a" style="left:114.4px;top:85.8px;" width="10" height="10" viewBox="0 0 10 10"><path d="M1.4,1.4 L8.6,8.6 M8.6,1.4 L1.4,8.6" stroke="#b4b4b4" stroke-width="1.2"/></svg><div class="a t" style="left:143.6px;top:83.1px;font-size:13px;color:#b4b4b4;font-weight:bold;transform:scaleX(0.9887);transform-origin:0 0;">liz farm stuff.ai*</div><svg class="a" style="left:251.39999999999998px;top:85.8px;" width="10" height="10" viewBox="0 0 10 10"><path d="M1.4,1.4 L8.6,8.6 M8.6,1.4 L1.4,8.6" stroke="#b4b4b4" stroke-width="1.2"/></svg><div class="a t" style="left:280.1px;top:83.1px;font-size:13px;color:#b4b4b4;font-weight:bold;transform:scaleX(0.9498);transform-origin:0 0;">SHAW FARM STUFF HARD.ai*</div><svg class="a" style="left:470.5px;top:85.8px;" width="10" height="10" viewBox="0 0 10 10"><path d="M1.4,1.4 L8.6,8.6 M8.6,1.4 L1.4,8.6" stroke="#b4b4b4" stroke-width="1.2"/></svg><div class="a t" style="left:499.2px;top:83.1px;font-size:13px;color:#b4b4b4;font-weight:bold;transform:scaleX(0.9430);transform-origin:0 0;">27.55X38 FARM SCENE WITH DOGS.svg*</div><svg class="a" style="left:752.8px;top:85.8px;" width="10" height="10" viewBox="0 0 10 10"><path d="M1.4,1.4 L8.6,8.6 M8.6,1.4 L1.4,8.6" stroke="#b4b4b4" stroke-width="1.2"/></svg><div class="a t" style="left:782.8px;top:83.1px;font-size:13px;color:#ffffff;font-weight:bold;transform:scaleX(0.9518);transform-origin:0 0;">27.55X38 FARM SCENE WITH COWS.dxf @ 50 % (RGB/CPU Preview)</div><svg class="a" style="left:1203.3px;top:85.8px;" width="10" height="10" viewBox="0 0 10 10"><path d="M1.4,1.4 L8.6,8.6 M8.6,1.4 L1.4,8.6" stroke="#e8e8e8" stroke-width="1.2"/></svg><div class="a" style="left:131px;top:73px;width:1px;height:33px;background:#3a3a3a;"></div><div class="a" style="left:267px;top:73px;width:1px;height:33px;background:#3a3a3a;"></div><div class="a" style="left:487px;top:73px;width:1px;height:33px;background:#3a3a3a;"></div><svg class="a" style="left:1247px;top:84.6px;" width="14" height="11" viewBox="0 0 14 11"><polyline points="1,1 5.4,5.2 1,9.4" fill="none" stroke="#dcdcdc" stroke-width="1.5"/><polyline points="7.8,1 12.2,5.2 7.8,9.4" fill="none" stroke="#dcdcdc" stroke-width="1.5"/></svg><div class="a" style="left:0px;top:73px;width:48px;height:828px;background:#3c3c3c;"></div><div class="a" style="left:1px;top:88px;width:44px;height:813px;background:#535353;"></div><div class="a" style="left:1px;top:73px;width:44px;height:15px;background:#454545;"></div><svg class="a" style="left:7px;top:76px;" width="9" height="8" viewBox="0 0 9 8"><polyline points="1,1 3.6,3.6 1,6.2" fill="none" stroke="#d0d0d0" stroke-width="1"/><polyline points="5,1 7.6,3.6 5,6.2" fill="none" stroke="#d0d0d0" stroke-width="1"/></svg><svg class="a" style="left:11px;top:91px;" width="24" height="5" viewBox="0 0 24 5"><rect x="0" y="0" width="1" height="4" fill="#3c3c3c"/><rect x="2" y="0" width="1" height="4" fill="#3c3c3c"/><rect x="4" y="0" width="1" height="4" fill="#3c3c3c"/><rect x="6" y="0" width="1" height="4" fill="#3c3c3c"/><rect x="8" y="0" width="1" height="4" fill="#3c3c3c"/><rect x="10" y="0" width="1" height="4" fill="#3c3c3c"/><rect x="12" y="0" width="1" height="4" fill="#3c3c3c"/><rect x="14" y="0" width="1" height="4" fill="#3c3c3c"/><rect x="16" y="0" width="1" height="4" fill="#3c3c3c"/><rect x="18" y="0" width="1" height="4" fill="#3c3c3c"/><rect x="20" y="0" width="1" height="4" fill="#3c3c3c"/><rect x="22" y="0" width="1" height="4" fill="#3c3c3c"/></svg><div class="a" style="left:7px;top:111px;width:32px;height:26px;background:#2c2c2c;border-radius:3px;"></div><svg class="a" style="left:9px;top:110px;" width="28" height="28" viewBox="0 0 28 28"><path d="M8.8,4.5 V24 L13.5,19.2 L22,17.8 Z" fill="none" stroke="#f0f0f0" stroke-width="1.5" stroke-linejoin="miter"/></svg><svg class="a" style="left:9px;top:138px;" width="28" height="28" viewBox="0 0 28 28"><path d="M8,4 V25 L13.2,19.6 L22.5,18.4 Z" fill="#cdcdcd"/></svg><svg class="a" style="left:9px;top:165.6px;" width="28" height="28" viewBox="0 0 28 28"><path d="M5,22 L17,10" stroke="#cdcdcd" stroke-width="2.2" stroke-linecap="round"/><path d="M10.5,6 l1,2.4 2.4,1 -2.4,1 -1,2.4 -1,-2.4 -2.4,-1 2.4,-1Z M19,3.5 l.8,1.8 1.8,.8 -1.8,.8 -.8,1.8 -.8,-1.8 -1.8,-.8 1.8,-.8Z M21,12 l.6,1.4 1.4,.6 -1.4,.6 -.6,1.4 -.6,-1.4 -1.4,-.6 1.4,-.6Z" fill="#cdcdcd"/></svg><svg class="a" style="left:9px;top:193px;" width="28" height="28" viewBox="0 0 28 28"><path d="M9,18 C2,15 4,6 13,5.5 C20,5.5 23,10 22,14" fill="none" stroke="#cdcdcd" stroke-width="1.6"/><circle cx="9" cy="17" r="2.6" fill="none" stroke="#cdcdcd" stroke-width="1.4"/><path d="M9,19.5 q2,3 -1,5" fill="none" stroke="#cdcdcd" stroke-width="1.4"/><path d="M14.5,10 V25 L18.2,21.2 L25,20.2 Z" fill="#cdcdcd"/></svg><svg class="a" style="left:9px;top:220px;" width="28" height="28" viewBox="0 0 28 28"><rect x="3" y="8" width="8" height="2" fill="#cdcdcd"/><path d="M19,4 L25,9.5 L21.5,13.5 L15.5,8 Z" fill="#cdcdcd"/><path d="M14.6,9 L20.6,14.5 L17,21 L6.5,24.5 L9,13.5 Z" fill="#cdcdcd"/><path d="M7.5,23.5 L14,17" stroke="#535353" stroke-width="1.3"/><circle cx="14.6" cy="16.4" r="1.5" fill="#535353"/></svg><svg class="a" style="left:9px;top:248px;" width="28" height="28" viewBox="0 0 28 28"><path d="M19,4 L25,9.5 L21.5,13.5 L15.5,8 Z" fill="#cdcdcd"/><path d="M14.6,9 L20.6,14.5 L17,21 L6.5,24.5 L9,13.5 Z" fill="#cdcdcd"/><path d="M7.5,23.5 L14,17" stroke="#535353" stroke-width="1.3"/><circle cx="14.6" cy="16.4" r="1.5" fill="#535353"/><path d="M5.5,7 q3.5,-2.5 2.5,3 q-3,6 -2.5,9.5 q0.5,3.5 3,3" fill="none" stroke="#cdcdcd" stroke-width="1.6"/></svg><svg class="a" style="left:9px;top:275px;" width="28" height="28" viewBox="0 0 28 28"><path d="M6.5,5 H21.5 V9.5 H19.8 V7.2 H15.2 V21.8 H18 V23.6 H10 V21.8 H12.8 V7.2 H8.2 V9.5 H6.5 Z" fill="#cdcdcd"/></svg><svg class="a" style="left:9px;top:303px;" width="28" height="28" viewBox="0 0 28 28"><path d="M5.5,22.5 L22.5,5.5" stroke="#cdcdcd" stroke-width="1.8"/></svg><svg class="a" style="left:9px;top:330px;" width="28" height="28" viewBox="0 0 28 28"><rect x="5" y="6" width="18" height="15" fill="#7a7a7a" stroke="#cdcdcd" stroke-width="1.6"/></svg><svg class="a" style="left:9px;top:358px;" width="28" height="28" viewBox="0 0 28 28"><path d="M22.5,4 q1.6,0.8 0.6,2.8 L14,17.5 L11.2,15.2 L20.2,4.6 q1.2,-1.2 2.3,-0.6Z" fill="#cdcdcd"/><path d="M10.4,16 L13.2,18.4 q0.6,3.6 -3.2,4.6 q-3,0.6 -5,-1 q2.6,-0.6 2.6,-3 q0.2,-2.6 2.8,-3Z" fill="#cdcdcd"/></svg><svg class="a" style="left:9px;top:385px;" width="28" height="28" viewBox="0 0 28 28"><path d="M11,23 A6.8,6.8 0 1 1 17.5,13" fill="#7a7a7a" stroke="#cdcdcd" stroke-width="1.5"/><path d="M22.2,9 L25.2,12 L15.5,22.2 L11.5,23.6 L12.5,19.4 Z" fill="#cdcdcd"/></svg><svg class="a" style="left:9px;top:412px;" width="28" height="28" viewBox="0 0 28 28"><path d="M15,5 L24,12.5 L17.5,20.5 L8.5,13 Z" fill="#cdcdcd"/><path d="M7.6,14.2 L16.4,21.6 L14,24.5 L5.2,17.2 Z" fill="none" stroke="#cdcdcd" stroke-width="1.5"/></svg><svg class="a" style="left:9px;top:440px;" width="28" height="28" viewBox="0 0 28 28"><path d="M10.5,10.5 A7.5,7.5 0 0 1 22,17" fill="none" stroke="#cdcdcd" stroke-width="2"/><path d="M12.5,5.5 L5.5,11.5 L13.5,14.5 Z" fill="#cdcdcd"/><path d="M22,17 A7.5,7.5 0 0 1 7,17" fill="none" stroke="#cdcdcd" stroke-width="1.4" stroke-dasharray="1.4 2"/></svg><svg class="a" style="left:9px;top:467px;" width="28" height="28" viewBox="0 0 28 28"><rect x="9.5" y="4.5" width="15" height="13" fill="none" stroke="#cdcdcd" stroke-width="1.5"/><rect x="4.5" y="12.5" width="10" height="10" fill="#535353" stroke="#cdcdcd" stroke-width="1.5"/><path d="M16,12.5 L21.5,7 M17.5,7 H21.5 V11" fill="none" stroke="#cdcdcd" stroke-width="1.4"/></svg><svg class="a" style="left:9px;top:495px;" width="28" height="28" viewBox="0 0 28 28"><path d="M7,10.2 C7.6,5 13.4,4.6 14.2,10 C15,16 21.6,15.6 23.6,10.6" fill="none" stroke="#cdcdcd" stroke-width="3.4" stroke-linecap="round"/><path d="M23.4,9.6 q2.6,2.4 1.2,7" fill="none" stroke="#cdcdcd" stroke-width="1.8" stroke-linecap="round"/><path d="M9,12 q3,6 9,4.5" fill="none" stroke="#cdcdcd" stroke-width="2.6"/><path d="M5.6,22 L17.2,8.6" stroke="#535353" stroke-width="2.8"/><path d="M5.6,22 L17.2,8.6" stroke="#cdcdcd" stroke-width="1.1"/><circle cx="5.6" cy="22" r="1.7" fill="#535353" stroke="#cdcdcd" stroke-width="1"/><circle cx="17.2" cy="8.6" r="1.7" fill="#535353" stroke="#cdcdcd" stroke-width="1"/></svg><svg class="a" style="left:9px;top:522px;" width="28" height="28" viewBox="0 0 28 28"><rect x="11" y="8" width="14" height="14" fill="none" stroke="#cdcdcd" stroke-width="1.2"/><rect x="9.7" y="20.7" width="2.6" height="2.6" fill="#cdcdcd"/><rect x="16.7" y="20.7" width="2.6" height="2.6" fill="#cdcdcd"/><rect x="23.7" y="20.7" width="2.6" height="2.6" fill="#cdcdcd"/><rect x="23.7" y="13.7" width="2.6" height="2.6" fill="#cdcdcd"/><rect x="23.7" y="6.7" width="2.6" height="2.6" fill="#cdcdcd"/><rect x="16.7" y="6.7" width="2.6" height="2.6" fill="#cdcdcd"/><path d="M3.8,5.6 V21 L8.4,16.4 L14.8,15 Z" fill="#cdcdcd" stroke="#535353" stroke-width="0.6"/></svg><svg class="a" style="left:9px;top:550px;" width="28" height="28" viewBox="0 0 28 28"><circle cx="13" cy="13" r="8.6" fill="none" stroke="#cdcdcd" stroke-width="1.4"/><circle cx="9.4" cy="13" r="4.6" fill="none" stroke="#cdcdcd" stroke-width="1.3"/><path d="M6.4,13 H16.5" stroke="#cdcdcd" stroke-width="1.3" stroke-dasharray="1.6 1.2"/><path d="M17.2,11.2 V24.6 L20.6,21.2 L26.2,20.2 Z" fill="#cdcdcd" stroke="#535353" stroke-width="0.9"/></svg><svg class="a" style="left:9px;top:578px;" width="28" height="28" viewBox="0 0 28 28"><path d="M3.8,5.7 V23.4 M3.8,5.7 L15.4,8.8 V13.7 L3.8,23.4 M7.8,6.8 V20 M11.6,7.8 V16.8 M3.8,11.6 L15.4,10.9 M3.8,17.4 L15.4,12.6" fill="none" stroke="#cdcdcd" stroke-width="1.3"/><path d="M12.5,16.7 H19.5 M9,19.8 H22.5 M4,23.4 H24.2" stroke="#cdcdcd" stroke-width="1.2"/></svg><svg class="a" style="left:9px;top:606px;" width="28" height="28" viewBox="0 0 28 28"><rect x="5.5" y="6.5" width="17" height="15" fill="none" stroke="#cdcdcd" stroke-width="1.5"/><path d="M5.5,12 q6,-4 10,1 q4,4 7,1 M5.5,17 q5,-3 8,1 q3,4 9,-1 M11,6.5 q-3,6 1,9 q2,3 -1,6 M17,6.5 q3,5 0,9 q-2,3 0,6" fill="none" stroke="#cdcdcd" stroke-width="1.2"/></svg><svg class="a" style="left:9px;top:633px;" width="28" height="28" viewBox="0 0 28 28"><defs><linearGradient id="gtool" x1="0" x2="1"><stop offset="0" stop-color="#333"/><stop offset="1" stop-color="#d4d4d4"/></linearGradient></defs><rect x="5.5" y="6.5" width="17" height="15" fill="url(#gtool)" stroke="#cdcdcd" stroke-width="1.5"/></svg><svg class="a" style="left:9px;top:661px;" width="28" height="28" viewBox="0 0 28 28"><path d="M19.5,3.5 q3,-1.5 4.5,1.5 q0.6,2 -1.4,3.4 L20.5,10 L21.6,11.2 L19.8,13 L14.4,7.6 L16.2,5.8 L17.4,6.8 Z" fill="#cdcdcd"/><path d="M15.4,9.6 L18,12.2 L9.5,21 L6.5,23.6 L5,22 L7.4,18.8 Z" fill="none" stroke="#cdcdcd" stroke-width="1.4"/></svg><svg class="a" style="left:9px;top:689px;" width="28" height="28" viewBox="0 0 28 28"><rect x="4" y="4.5" width="9" height="9" fill="#cdcdcd"/><circle cx="14.5" cy="13" r="5" fill="#8a8a8a" stroke="#535353" stroke-width="0.8"/><circle cx="19.5" cy="17.5" r="4.6" fill="#535353" stroke="#cdcdcd" stroke-width="1.5"/></svg><svg class="a" style="left:9px;top:716px;" width="28" height="28" viewBox="0 0 28 28"><rect x="11.5" y="10.5" width="11" height="13" rx="1" fill="none" stroke="#cdcdcd" stroke-width="1.5"/><circle cx="17" cy="17" r="2.6" fill="none" stroke="#cdcdcd" stroke-width="1.4"/><path d="M14,10 V8 H19.5 V10 M15.5,8 L17.5,5 H19 V8" fill="#cdcdcd" stroke="#cdcdcd" stroke-width="0.8"/><rect x="4" y="6" width="1.8" height="1.8" fill="#cdcdcd"/><rect x="7.5" y="6" width="1.8" height="1.8" fill="#cdcdcd"/><rect x="11" y="6" width="1.8" height="1.8" fill="#cdcdcd"/><rect x="4" y="9.5" width="1.8" height="1.8" fill="#cdcdcd"/><rect x="7.5" y="9.5" width="1.8" height="1.8" fill="#cdcdcd"/><rect x="4" y="13" width="1.8" height="1.8" fill="#cdcdcd"/></svg><svg class="a" style="left:9px;top:744px;" width="28" height="28" viewBox="0 0 28 28"><path d="M5,4 V23.5 H24" fill="none" stroke="#cdcdcd" stroke-width="1.4"/><rect x="8" y="13" width="3.6" height="9.5" fill="#cdcdcd"/><rect x="13.5" y="7" width="3.6" height="15.5" fill="#cdcdcd"/><rect x="19" y="10" width="3.6" height="12.5" fill="#cdcdcd"/></svg><svg class="a" style="left:9px;top:771px;" width="28" height="28" viewBox="0 0 28 28"><path d="M9.5,3 V24.5 M3,9.5 H13" fill="none" stroke="#cdcdcd" stroke-width="1.3"/><path d="M10.5,10.5 H18.5 L23,15 V23.5 H10.5 Z" fill="#7a7a7a" stroke="#cdcdcd" stroke-width="1.5"/><path d="M18.5,10.5 V15 H23" fill="none" stroke="#cdcdcd" stroke-width="1.2"/></svg><svg class="a" style="left:9px;top:799px;" width="28" height="28" viewBox="0 0 28 28"><path d="M18.5,4 L24,7.5 L21,12.5 L15.5,9 Z" fill="#cdcdcd"/><path d="M15,10 L20.4,13.4 L5,24 Z" fill="none" stroke="#cdcdcd" stroke-width="1.4" stroke-linejoin="round"/></svg><svg class="a" style="left:9px;top:826.6px;" width="28" height="28" viewBox="0 0 28 28"><path d="M8.5,24 L4.5,17 q-1.2,-2.6 1.4,-2 L8.6,17.4 V8 q1.1,-1.8 2.3,0 V13.5 L11.6,6 q1.2,-1.8 2.4,0 V13.5 L15.2,6.8 q1.2,-1.8 2.4,0 V14 L18.8,9.5 q1.2,-1.6 2.2,0 V18 q0,4 -2.5,6 Z" fill="#cdcdcd"/></svg><svg class="a" style="left:9px;top:854px;" width="28" height="28" viewBox="0 0 28 28"><circle cx="11.5" cy="11.5" r="7" fill="none" stroke="#cdcdcd" stroke-width="1.8"/><path d="M16.8,16.8 L23.5,23.5" stroke="#cdcdcd" stroke-width="2.6" stroke-linecap="round"/></svg><svg class="a" style="left:34.2px;top:159.2px;" width="4" height="4" viewBox="0 0 4 4"><path d="M4,0 V4 H0 Z" fill="#d0d0d0"/></svg><svg class="a" style="left:34.2px;top:241.2px;" width="4" height="4" viewBox="0 0 4 4"><path d="M4,0 V4 H0 Z" fill="#d0d0d0"/></svg><svg class="a" style="left:34.2px;top:296.2px;" width="4" height="4" viewBox="0 0 4 4"><path d="M4,0 V4 H0 Z" fill="#d0d0d0"/></svg><svg class="a" style="left:34.2px;top:324.2px;" width="4" height="4" viewBox="0 0 4 4"><path d="M4,0 V4 H0 Z" fill="#d0d0d0"/></svg><svg class="a" style="left:34.2px;top:351.2px;" width="4" height="4" viewBox="0 0 4 4"><path d="M4,0 V4 H0 Z" fill="#d0d0d0"/></svg><svg class="a" style="left:34.2px;top:379.2px;" width="4" height="4" viewBox="0 0 4 4"><path d="M4,0 V4 H0 Z" fill="#d0d0d0"/></svg><svg class="a" style="left:34.2px;top:406.2px;" width="4" height="4" viewBox="0 0 4 4"><path d="M4,0 V4 H0 Z" fill="#d0d0d0"/></svg><svg class="a" style="left:34.2px;top:433.2px;" width="4" height="4" viewBox="0 0 4 4"><path d="M4,0 V4 H0 Z" fill="#d0d0d0"/></svg><svg class="a" style="left:34.2px;top:461.2px;" width="4" height="4" viewBox="0 0 4 4"><path d="M4,0 V4 H0 Z" fill="#d0d0d0"/></svg><svg class="a" style="left:34.2px;top:488.2px;" width="4" height="4" viewBox="0 0 4 4"><path d="M4,0 V4 H0 Z" fill="#d0d0d0"/></svg><svg class="a" style="left:34.2px;top:516.2px;" width="4" height="4" viewBox="0 0 4 4"><path d="M4,0 V4 H0 Z" fill="#d0d0d0"/></svg><svg class="a" style="left:34.2px;top:543.2px;" width="4" height="4" viewBox="0 0 4 4"><path d="M4,0 V4 H0 Z" fill="#d0d0d0"/></svg><svg class="a" style="left:34.2px;top:571.2px;" width="4" height="4" viewBox="0 0 4 4"><path d="M4,0 V4 H0 Z" fill="#d0d0d0"/></svg><svg class="a" style="left:34.2px;top:599.2px;" width="4" height="4" viewBox="0 0 4 4"><path d="M4,0 V4 H0 Z" fill="#d0d0d0"/></svg><svg class="a" style="left:34.2px;top:682.2px;" width="4" height="4" viewBox="0 0 4 4"><path d="M4,0 V4 H0 Z" fill="#d0d0d0"/></svg><svg class="a" style="left:34.2px;top:737.2px;" width="4" height="4" viewBox="0 0 4 4"><path d="M4,0 V4 H0 Z" fill="#d0d0d0"/></svg><svg class="a" style="left:34.2px;top:765.2px;" width="4" height="4" viewBox="0 0 4 4"><path d="M4,0 V4 H0 Z" fill="#d0d0d0"/></svg><svg class="a" style="left:34.2px;top:820.2px;" width="4" height="4" viewBox="0 0 4 4"><path d="M4,0 V4 H0 Z" fill="#d0d0d0"/></svg><svg class="a" style="left:34.2px;top:847.8000000000001px;" width="4" height="4" viewBox="0 0 4 4"><path d="M4,0 V4 H0 Z" fill="#d0d0d0"/></svg><svg class="a" style="left:5px;top:890px;" width="20" height="13" viewBox="0 0 20 13"><rect x="7.5" y="6.5" width="9" height="8" fill="#111" stroke="#e8e8e8" stroke-width="1.6"/><rect x="2" y="1" width="10" height="9" fill="#fff" stroke="#111" stroke-width="1.4"/></svg><svg class="a" style="left:30px;top:890px;" width="14" height="13" viewBox="0 0 14 13"><path d="M10.5,13 V7.5 q0,-3 -3.5,-3 H3" fill="none" stroke="#d0d0d0" stroke-width="2"/><path d="M6,0.5 L1,4.5 L6,8.5 Z" fill="#d0d0d0"/></svg><div class="a" style="left:1248px;top:107px;width:18px;height:776px;background:#4a4a4a;"></div><div class="a" style="left:1250px;top:557px;width:15px;height:28px;background:#646464;border-radius:7.5px;"></div><svg class="a" style="left:1252.5px;top:851.25px;" width="9" height="5.5" viewBox="0 0 9 5.5"><polyline points="1,4.5 4.5,1 8,4.5" fill="none" stroke="#a0a0a0" stroke-width="1.2" stroke-linecap="round" stroke-linejoin="round"/></svg><svg class="a" style="left:1252.5px;top:869.25px;" width="9" height="5.5" viewBox="0 0 9 5.5"><polyline points="1,1 4.5,4.5 8,1" fill="none" stroke="#a0a0a0" stroke-width="1.2" stroke-linecap="round" stroke-linejoin="round"/></svg><div class="a" style="left:1266px;top:73px;width:4px;height:828px;background:#3c3c3c;"></div><div class="a" style="left:1270px;top:73px;width:318px;height:15px;background:#464646;"></div><div class="a" style="left:1270px;top:87.5px;width:318px;height:1px;background:#3c3c3c;"></div><div class="a" style="left:1270px;top:88px;width:42px;height:813px;background:#535353;"></div><div class="a" style="left:1312px;top:88px;width:4px;height:813px;background:#3c3c3c;"></div><svg class="a" style="left:1297.4px;top:77px;" width="9" height="8" viewBox="0 0 9 8"><polyline points="3.6,1 1,3.6 3.6,6.2" fill="none" stroke="#d0d0d0" stroke-width="1"/><polyline points="7.6,1 5,3.6 7.6,6.2" fill="none" stroke="#d0d0d0" stroke-width="1"/></svg><div class="a" style="left:1270px;top:166px;width:42px;height:1.4px;background:#3e3e3e;"></div><div class="a" style="left:1270px;top:277px;width:42px;height:1.4px;background:#3e3e3e;"></div><div class="a" style="left:1270px;top:356px;width:42px;height:1.4px;background:#3e3e3e;"></div><div class="a" style="left:1270px;top:436px;width:42px;height:1.4px;background:#3e3e3e;"></div><div class="a" style="left:1270px;top:483px;width:42px;height:1.4px;background:#3e3e3e;"></div><div class="a" style="left:1270px;top:530px;width:42px;height:1.4px;background:#3e3e3e;"></div><svg class="a" style="left:1280px;top:92px;" width="22" height="5" viewBox="0 0 22 5"><rect x="0" y="0" width="1" height="4" fill="#3a3a3a"/><rect x="2" y="0" width="1" height="4" fill="#3a3a3a"/><rect x="4" y="0" width="1" height="4" fill="#3a3a3a"/><rect x="6" y="0" width="1" height="4" fill="#3a3a3a"/><rect x="8" y="0" width="1" height="4" fill="#3a3a3a"/><rect x="10" y="0" width="1" height="4" fill="#3a3a3a"/><rect x="12" y="0" width="1" height="4" fill="#3a3a3a"/><rect x="14" y="0" width="1" height="4" fill="#3a3a3a"/><rect x="16" y="0" width="1" height="4" fill="#3a3a3a"/><rect x="18" y="0" width="1" height="4" fill="#3a3a3a"/><rect x="20" y="0" width="1" height="4" fill="#3a3a3a"/></svg><svg class="a" style="left:1280px;top:171px;" width="22" height="5" viewBox="0 0 22 5"><rect x="0" y="0" width="1" height="4" fill="#3a3a3a"/><rect x="2" y="0" width="1" height="4" fill="#3a3a3a"/><rect x="4" y="0" width="1" height="4" fill="#3a3a3a"/><rect x="6" y="0" width="1" height="4" fill="#3a3a3a"/><rect x="8" y="0" width="1" height="4" fill="#3a3a3a"/><rect x="10" y="0" width="1" height="4" fill="#3a3a3a"/><rect x="12" y="0" width="1" height="4" fill="#3a3a3a"/><rect x="14" y="0" width="1" height="4" fill="#3a3a3a"/><rect x="16" y="0" width="1" height="4" fill="#3a3a3a"/><rect x="18" y="0" width="1" height="4" fill="#3a3a3a"/><rect x="20" y="0" width="1" height="4" fill="#3a3a3a"/></svg><svg class="a" style="left:1280px;top:282px;" width="22" height="5" viewBox="0 0 22 5"><rect x="0" y="0" width="1" height="4" fill="#3a3a3a"/><rect x="2" y="0" width="1" height="4" fill="#3a3a3a"/><rect x="4" y="0" width="1" height="4" fill="#3a3a3a"/><rect x="6" y="0" width="1" height="4" fill="#3a3a3a"/><rect x="8" y="0" width="1" height="4" fill="#3a3a3a"/><rect x="10" y="0" width="1" height="4" fill="#3a3a3a"/><rect x="12" y="0" width="1" height="4" fill="#3a3a3a"/><rect x="14" y="0" width="1" height="4" fill="#3a3a3a"/><rect x="16" y="0" width="1" height="4" fill="#3a3a3a"/><rect x="18" y="0" width="1" height="4" fill="#3a3a3a"/><rect x="20" y="0" width="1" height="4" fill="#3a3a3a"/></svg><svg class="a" style="left:1280px;top:362px;" width="22" height="5" viewBox="0 0 22 5"><rect x="0" y="0" width="1" height="4" fill="#3a3a3a"/><rect x="2" y="0" width="1" height="4" fill="#3a3a3a"/><rect x="4" y="0" width="1" height="4" fill="#3a3a3a"/><rect x="6" y="0" width="1" height="4" fill="#3a3a3a"/><rect x="8" y="0" width="1" height="4" fill="#3a3a3a"/><rect x="10" y="0" width="1" height="4" fill="#3a3a3a"/><rect x="12" y="0" width="1" height="4" fill="#3a3a3a"/><rect x="14" y="0" width="1" height="4" fill="#3a3a3a"/><rect x="16" y="0" width="1" height="4" fill="#3a3a3a"/><rect x="18" y="0" width="1" height="4" fill="#3a3a3a"/><rect x="20" y="0" width="1" height="4" fill="#3a3a3a"/></svg><svg class="a" style="left:1280px;top:442px;" width="22" height="5" viewBox="0 0 22 5"><rect x="0" y="0" width="1" height="4" fill="#3a3a3a"/><rect x="2" y="0" width="1" height="4" fill="#3a3a3a"/><rect x="4" y="0" width="1" height="4" fill="#3a3a3a"/><rect x="6" y="0" width="1" height="4" fill="#3a3a3a"/><rect x="8" y="0" width="1" height="4" fill="#3a3a3a"/><rect x="10" y="0" width="1" height="4" fill="#3a3a3a"/><rect x="12" y="0" width="1" height="4" fill="#3a3a3a"/><rect x="14" y="0" width="1" height="4" fill="#3a3a3a"/><rect x="16" y="0" width="1" height="4" fill="#3a3a3a"/><rect x="18" y="0" width="1" height="4" fill="#3a3a3a"/><rect x="20" y="0" width="1" height="4" fill="#3a3a3a"/></svg><svg class="a" style="left:1280px;top:488px;" width="22" height="5" viewBox="0 0 22 5"><rect x="0" y="0" width="1" height="4" fill="#3a3a3a"/><rect x="2" y="0" width="1" height="4" fill="#3a3a3a"/><rect x="4" y="0" width="1" height="4" fill="#3a3a3a"/><rect x="6" y="0" width="1" height="4" fill="#3a3a3a"/><rect x="8" y="0" width="1" height="4" fill="#3a3a3a"/><rect x="10" y="0" width="1" height="4" fill="#3a3a3a"/><rect x="12" y="0" width="1" height="4" fill="#3a3a3a"/><rect x="14" y="0" width="1" height="4" fill="#3a3a3a"/><rect x="16" y="0" width="1" height="4" fill="#3a3a3a"/><rect x="18" y="0" width="1" height="4" fill="#3a3a3a"/><rect x="20" y="0" width="1" height="4" fill="#3a3a3a"/></svg><svg class="a" style="left:1278.0px;top:100.0px;" width="28" height="28" viewBox="0 0 28 28"><rect x="9" y="18.2" width="10.4" height="7.6" rx="0.6" fill="#cdcdcd"/><path d="M12.2,18.6 L8.4,12.6 M14,18.6 L12.7,8.5 M15.8,18.6 L19.4,11.4" stroke="#cdcdcd" stroke-width="1.5"/><path d="M6.2,5.6 q4.4,1.4 4.2,6 q-0.6,1.8 -2.4,1.8 q-3.2,-2.4 -1.8,-7.8Z" fill="#cdcdcd"/><path d="M12.2,3 l1.5,1.3 l-0.4,1.5 l1.3,1.6 l-1.2,2.2 h-1.8 l-1.1,-2 l1.1,-1.8 l-0.5,-1.5Z" fill="#cdcdcd"/><path d="M16.4,10.4 q1.2,-4.4 5.4,-3.6 q1.8,0.8 2.4,3 q-1,1.6 -2.6,1 q-2.6,-1.6 -5.2,-0.4Z" fill="#cdcdcd"/></svg><svg class="a" style="left:1278.0px;top:133.0px;" width="28" height="28" viewBox="0 0 28 28"><circle cx="14" cy="8" r="4.5" fill="#cdcdcd"/><circle cx="9.2" cy="14" r="4.5" fill="#cdcdcd"/><circle cx="18.8" cy="14" r="4.5" fill="#cdcdcd"/><path d="M14,12 q0.6,8 -6,10.8 h12 q-6.6,-2.8 -6,-10.8Z" fill="#cdcdcd"/></svg><svg class="a" style="left:1278.0px;top:180.6px;" width="28" height="28" viewBox="0 0 28 28"><rect x="4" y="5.5" width="20" height="1.4" fill="#cdcdcd"/><rect x="4" y="11" width="20" height="2.4" fill="#cdcdcd"/><rect x="4" y="17" width="20" height="3.6" fill="#cdcdcd"/></svg><svg class="a" style="left:1278.0px;top:212.0px;" width="28" height="28" viewBox="0 0 28 28"><defs><linearGradient id="gdock" x1="0" x2="1"><stop offset="0" stop-color="#222"/><stop offset="1" stop-color="#e0e0e0"/></linearGradient></defs><rect x="4.5" y="7.5" width="19" height="13" fill="url(#gdock)" stroke="#cdcdcd" stroke-width="1.4"/></svg><svg class="a" style="left:1278.0px;top:245.0px;" width="28" height="28" viewBox="0 0 28 28"><circle cx="11" cy="11" r="7.4" fill="#cdcdcd"/><circle cx="16.5" cy="17" r="6.6" fill="#8a8a8a" stroke="#cdcdcd" stroke-width="1.3"/></svg><svg class="a" style="left:1278.0px;top:291.0px;" width="28" height="28" viewBox="0 0 28 28"><circle cx="14" cy="14" r="6.6" fill="#cdcdcd"/><circle cx="14" cy="14" r="9.4" fill="none" stroke="#cdcdcd" stroke-width="1.3" stroke-dasharray="2 1.6"/></svg><svg class="a" style="left:1278.0px;top:324.0px;" width="28" height="28" viewBox="0 0 28 28"><rect x="8.5" y="4.5" width="15" height="15" fill="none" stroke="#cdcdcd" stroke-width="1.4"/><rect x="4.5" y="13.5" width="6" height="6" fill="#535353" stroke="#cdcdcd" stroke-width="1.3"/><rect x="7.5" y="16.5" width="6" height="6" fill="none" stroke="#cdcdcd" stroke-width="1.3"/></svg><svg class="a" style="left:1278.0px;top:370.0px;" width="28" height="28" viewBox="0 0 28 28"><path d="M12,6.5 H5 V23 H21.5 V16" fill="none" stroke="#cdcdcd" stroke-width="1.8"/><path d="M12,16 L22.5,5.5 M15.5,5 H23 V12.5" fill="none" stroke="#cdcdcd" stroke-width="1.8"/></svg><svg class="a" style="left:1278.0px;top:402.0px;" width="28" height="28" viewBox="0 0 28 28"><rect x="4.5" y="4.5" width="12" height="14" fill="none" stroke="#cdcdcd" stroke-width="1.4"/><rect x="9.5" y="12.5" width="14" height="11" fill="#535353" stroke="#cdcdcd" stroke-width="1.4"/></svg><svg class="a" style="left:1278.0px;top:449.0px;" width="28" height="28" viewBox="0 0 28 28"><path d="M5,5 h18 q1.5,0 1.5,1.5 v10 q0,1.5 -1.5,1.5 h-11 l-5,5 v-5 h-2 q-1.5,0 -1.5,-1.5 v-10 q0,-1.5 1.5,-1.5Z" fill="#cdcdcd"/></svg><svg class="a" style="left:1278.0px;top:498.0px;" width="28" height="28" viewBox="0 0 28 28"><rect x="6" y="6" width="10" height="10" fill="#cdcdcd"/><rect x="12" y="12" width="10" height="10" fill="#cdcdcd"/><rect x="12.6" y="12.6" width="2.8" height="2.8" fill="#535353" stroke="#cdcdcd" stroke-width="0"/><rect x="11.5" y="11.5" width="5" height="5" fill="none" stroke="#535353" stroke-width="1"/></svg><div class="a" style="left:1316px;top:88px;width:272px;height:30.6px;background:#424242;"></div><div class="a" style="left:1316px;top:118.6px;width:272px;height:783px;background:#535353;"></div><div class="a" style="left:1482px;top:88px;width:75px;height:31.6px;background:#535353;"></div><div class="a" style="left:1375px;top:88px;width:1px;height:30px;background:#3a3a3a;"></div><div class="a" style="left:1421px;top:88px;width:1px;height:30px;background:#3a3a3a;"></div><div class="a t" style="left:1326.8px;top:94.7px;font-size:12px;color:#b8b8b8;font-weight:bold;transform:scaleX(0.9072);transform-origin:0 0;">Libraries</div><div class="a t" style="left:1385.5px;top:94.7px;font-size:12px;color:#b8b8b8;font-weight:bold;transform:scaleX(0.8578);transform-origin:0 0;">Layers</div><div class="a" style="left:1431.5px;top:94.7px;width:49.8px;height:16px;overflow:hidden;"><div class="a t" style="left:0px;top:0px;font-size:12px;color:#b8b8b8;font-weight:bold;transform:scaleX(0.9170);transform-origin:0 0;">Image Trac</div></div><div class="a t" style="left:1492.2px;top:94.7px;font-size:12px;color:#ffffff;font-weight:bold;transform:scaleX(0.9333);transform-origin:0 0;">Properties</div><div class="a t" style="left:1326.8px;top:131.3px;font-size:12px;color:#d4d4d4;transform:scaleX(0.9173);transform-origin:0 0;">Group</div><div class="a" style="left:1316px;top:156px;width:272px;height:1px;background:#4c4c4c;"></div><div class="a t" style="left:1326.8px;top:170.3px;font-size:12px;color:#d4d4d4;transform:scaleX(0.9330);transform-origin:0 0;">Transform</div><svg class="a" style="left:1326.2px;top:208px;" width="23" height="23" viewBox="0 0 24 24"><path d="M3,3 H21 V21 H3 Z M3,12 H21 M12,3 V21" fill="none" stroke="#cdcdcd" stroke-width="1"/><rect x="0.5" y="0.5" width="5" height="5" fill="#535353" stroke="#cdcdcd" stroke-width="1.3"/><rect x="0.5" y="9.5" width="5" height="5" fill="#535353" stroke="#cdcdcd" stroke-width="1.3"/><rect x="0.5" y="18.5" width="5" height="5" fill="#535353" stroke="#cdcdcd" stroke-width="1.3"/><rect x="9.5" y="0.5" width="5" height="5" fill="#535353" stroke="#cdcdcd" stroke-width="1.3"/><rect x="9.5" y="9.5" width="5" height="5" fill="#ffffff" stroke="#cdcdcd" stroke-width="1.3"/><rect x="9.5" y="18.5" width="5" height="5" fill="#535353" stroke="#cdcdcd" stroke-width="1.3"/><rect x="18.5" y="0.5" width="5" height="5" fill="#535353" stroke="#cdcdcd" stroke-width="1.3"/><rect x="18.5" y="9.5" width="5" height="5" fill="#535353" stroke="#cdcdcd" stroke-width="1.3"/><rect x="18.5" y="18.5" width="5" height="5" fill="#535353" stroke="#cdcdcd" stroke-width="1.3"/></svg><div class="a t" style="left:1361.3px;top:197.3px;font-size:12px;color:#d4d4d4;transform:scaleX(0.8639);transform-origin:0 0;">X:</div><div class="a" style="left:1378px;top:192.5px;width:63px;height:23px;background:#454545;border:1px solid #5f5f5f;box-sizing:border-box;border-radius:2px;"></div><div class="a t" style="left:1382.2px;top:195.4px;font-size:12px;color:#ececec;transform:scaleX(0.9556);transform-origin:0 0;">0.0057 in</div><div class="a t" style="left:1361.3px;top:227.3px;font-size:12px;color:#d4d4d4;transform:scaleX(0.9170);transform-origin:0 0;">Y:</div><div class="a" style="left:1378px;top:222.7px;width:63px;height:23px;background:#454545;border:1px solid #5f5f5f;box-sizing:border-box;border-radius:2px;"></div><div class="a t" style="left:1382.2px;top:225.6px;font-size:12px;color:#ececec;transform:scaleX(0.9556);transform-origin:0 0;">59.947 in</div><div class="a t" style="left:1459.6px;top:197.3px;font-size:12px;color:#d4d4d4;transform:scaleX(0.9133);transform-origin:0 0;">W:</div><div class="a" style="left:1480.5px;top:192.5px;width:63.5px;height:23px;background:#454545;border:1px solid #5f5f5f;box-sizing:border-box;border-radius:2px;"></div><div class="a t" style="left:1484.6px;top:195.4px;font-size:12px;color:#ececec;transform:scaleX(0.9489);transform-origin:0 0;">38 in</div><div class="a t" style="left:1459.6px;top:227.3px;font-size:12px;color:#d4d4d4;transform:scaleX(0.9583);transform-origin:0 0;">H:</div><div class="a" style="left:1480.5px;top:222.7px;width:63.5px;height:23px;background:#454545;border:1px solid #5f5f5f;box-sizing:border-box;border-radius:2px;"></div><div class="a t" style="left:1484.6px;top:225.6px;font-size:12px;color:#ececec;transform:scaleX(0.9508);transform-origin:0 0;">27.55 in</div><div class="a" style="left:1555.2px;top:206px;width:27.3px;height:27px;background:#2e2e2e;border-radius:3px;"></div><svg class="a" style="left:1562.4px;top:209.6px;" width="14" height="22" viewBox="0 0 14 22"><g fill="none" stroke="#f6f6f6" stroke-width="2" stroke-linecap="round"><path d="M3.2,10.6 V5.8 a3.8,3.8 0 0 1 7.6,0 V10 q0,2.4 -3,2.4"/><path d="M10.8,10.4 V15.2 a3.8,3.8 0 0 1 -7.6,0 V11.2 q0,-2.4 3,-2.4"/></g></svg><svg class="a" style="left:1355px;top:256px;" width="18" height="12" viewBox="0 0 18 12"><path d="M1,10.5 H12 M1,10.5 L9,1.5 M8.5,10.5 A7,7 0 0 0 6.3,5" fill="none" stroke="#cdcdcd" stroke-width="1.2"/><circle cx="16" cy="5" r="0.9" fill="#cdcdcd"/><circle cx="16" cy="10" r="0.9" fill="#cdcdcd"/></svg><div class="a" style="left:1375.3px;top:252.5px;width:64px;height:22.5px;background:#454545;border:1px solid #5f5f5f;box-sizing:border-box;border-radius:2px;"></div><div class="a t" style="left:1378.8px;top:255.14999999999998px;font-size:12px;color:#ececec;transform:scaleX(0.9927);transform-origin:0 0;">0°</div><div class="a" style="left:1418px;top:253.5px;width:1px;height:20.5px;background:#5f5f5f;"></div><svg class="a" style="left:1424.0px;top:261.75px;" width="9" height="5.5" viewBox="0 0 9 5.5"><polyline points="1,1 4.5,4.5 8,1" fill="none" stroke="#e0e0e0" stroke-width="1.6" stroke-linecap="round" stroke-linejoin="round"/></svg><svg class="a" style="left:1487.4px;top:258.2px;" width="16.4" height="14" viewBox="0 0 16.4 14"><path d="M0.8,1.4 L6,7 L0.8,12.6 Z" fill="none" stroke="#cdcdcd" stroke-width="1.2"/><path d="M15.6,1 L10.2,7 L15.6,13 Z" fill="#cdcdcd"/><path d="M8.2,0 V14" stroke="#cdcdcd" stroke-width="1" stroke-dasharray="1.4 1.4"/></svg><svg class="a" style="left:1516.6px;top:257.6px;" width="13.4" height="16" viewBox="0 0 13.4 16"><path d="M1,0.6 L6.7,6 L12.4,0.6 Z" fill="#cdcdcd"/><path d="M1.4,15.2 L6.7,10 L12,15.2 Z" fill="none" stroke="#cdcdcd" stroke-width="1.2"/><path d="M0,8 H13.4" stroke="#cdcdcd" stroke-width="1" stroke-dasharray="1.4 1.4"/></svg><svg class="a" style="left:1564px;top:286.3px;" width="17" height="5" viewBox="0 0 17 5"><circle cx="2.3" cy="2.5" r="2" fill="#d0d0d0"/><circle cx="8.4" cy="2.5" r="2" fill="#d0d0d0"/><circle cx="14.5" cy="2.5" r="2" fill="#d0d0d0"/></svg><div class="a" style="left:1316px;top:300px;width:272px;height:1px;background:#4c4c4c;"></div><div class="a t" style="left:1326.7px;top:314px;font-size:12px;color:#d4d4d4;transform:scaleX(0.9209);transform-origin:0 0;">Appearance</div><svg class="a" style="left:1327px;top:343px;" width="21" height="21" viewBox="0 0 21 21"><clipPath id="fc"><rect x="0.8" y="0.4" width="19" height="19.6"/></clipPath><rect x="0.8" y="0.4" width="19" height="19.6" fill="#fff"/><g clip-path="url(#fc)"><path d="M1.6,19.4 L19.2,1.2" stroke="#e0141c" stroke-width="2.2"/></g></svg><div class="a t" style="left:1361.2px;top:347px;font-size:12px;color:#d4d4d4;transform:scaleX(0.9003);transform-origin:0 0;">Fill</div><svg class="a" style="left:1327px;top:376px;" width="21" height="21" viewBox="0 0 21 21"><rect x="1.4" y="0.6" width="18" height="19" fill="#000" stroke="#d0d0d0" stroke-width="1.2"/><rect x="6.2" y="5.6" width="8.6" height="9" fill="#484848" stroke="#c4c4c4" stroke-width="1.3"/></svg><div class="a t" style="left:1361.2px;top:380px;font-size:12.5px;color:#ececec;transform:scaleX(0.8854);transform-origin:0 0;">Stroke</div><div class="a" style="left:1361.2px;top:395px;width:32px;height:0;border-top:1px dotted #c8c8c8;"></div><div class="a" style="left:1417.3px;top:374.5px;width:79.5px;height:23px;background:#454545;border:1px solid #5f5f5f;box-sizing:border-box;border-radius:2px;"></div><div class="a" style="left:1417.3px;top:374.5px;width:21px;height:23px;background:#4e4e4e;border:1px solid #5f5f5f;box-sizing:border-box;border-radius:2px 0 0 2px;"></div><div class="a" style="left:1476.3px;top:374.5px;width:20.5px;height:23px;background:#4e4e4e;border:1px solid #5f5f5f;box-sizing:border-box;border-radius:0 2px 2px 0;"></div><svg class="a" style="left:1422.7px;top:378.0px;" width="10" height="6" viewBox="0 0 10 6"><polyline points="1,5 5.0,1 9,5" fill="none" stroke="#e0e0e0" stroke-width="1.5" stroke-linecap="round" stroke-linejoin="round"/></svg><svg class="a" style="left:1422.7px;top:388.6px;" width="10" height="6" viewBox="0 0 10 6"><polyline points="1,1 5.0,5 9,1" fill="none" stroke="#e0e0e0" stroke-width="1.5" stroke-linecap="round" stroke-linejoin="round"/></svg><svg class="a" style="left:1481.8px;top:383.75px;" width="9" height="5.5" viewBox="0 0 9 5.5"><polyline points="1,1 4.5,4.5 8,1" fill="none" stroke="#e0e0e0" stroke-width="1.6" stroke-linecap="round" stroke-linejoin="round"/></svg><svg class="a" style="left:1327px;top:409px;" width="21" height="21" viewBox="0 0 21 21"><rect x="1.8" y="1.5" width="4.35" height="4.35" fill="#8a8a8a"/><rect x="1.8" y="5.85" width="4.35" height="4.35" fill="#6c6c6c"/><rect x="1.8" y="10.2" width="4.35" height="4.35" fill="#8a8a8a"/><rect x="1.8" y="14.549999999999999" width="4.35" height="4.35" fill="#6c6c6c"/><rect x="6.1499999999999995" y="1.5" width="4.35" height="4.35" fill="#6c6c6c"/><rect x="6.1499999999999995" y="5.85" width="4.35" height="4.35" fill="#8a8a8a"/><rect x="6.1499999999999995" y="10.2" width="4.35" height="4.35" fill="#6c6c6c"/><rect x="6.1499999999999995" y="14.549999999999999" width="4.35" height="4.35" fill="#8a8a8a"/><rect x="10.5" y="1.5" width="4.35" height="4.35" fill="#8a8a8a"/><rect x="10.5" y="5.85" width="4.35" height="4.35" fill="#6c6c6c"/><rect x="10.5" y="10.2" width="4.35" height="4.35" fill="#8a8a8a"/><rect x="10.5" y="14.549999999999999" width="4.35" height="4.35" fill="#6c6c6c"/><rect x="14.85" y="1.5" width="4.35" height="4.35" fill="#6c6c6c"/><rect x="14.85" y="5.85" width="4.35" height="4.35" fill="#8a8a8a"/><rect x="14.85" y="10.2" width="4.35" height="4.35" fill="#6c6c6c"/><rect x="14.85" y="14.549999999999999" width="4.35" height="4.35" fill="#8a8a8a"/><rect x="1.4" y="1.1" width="18" height="18" fill="none" stroke="#bdbdbd" stroke-width="1.2"/></svg><div class="a t" style="left:1361.2px;top:412.6px;font-size:12.5px;color:#ececec;transform:scaleX(0.8917);transform-origin:0 0;">Opacity</div><div class="a" style="left:1361.2px;top:427.6px;width:37.8px;height:0;border-top:1px dotted #c8c8c8;"></div><div class="a" style="left:1417.3px;top:408px;width:79.5px;height:23px;background:#454545;border:1px solid #5f5f5f;box-sizing:border-box;border-radius:2px;"></div><div class="a" style="left:1476.3px;top:408px;width:20.5px;height:23px;background:#4e4e4e;border:1px solid #5f5f5f;box-sizing:border-box;border-radius:0 2px 2px 0;"></div><div class="a t" style="left:1421.4px;top:411.8px;font-size:12px;color:#ececec;transform:scaleX(0.9315);transform-origin:0 0;">100%</div><svg class="a" style="left:1483.3px;top:414.5px;" width="6" height="10" viewBox="0 0 6 10"><polyline points="1,1 5,5.0 1,9" fill="none" stroke="#e0e0e0" stroke-width="1.6" stroke-linecap="round" stroke-linejoin="round"/></svg><svg class="a" style="left:1333px;top:450px;" width="19" height="18" viewBox="0 0 19 18"><path d="M10.2,1.6 q-3,-1 -3.8,2.4 L4,15 q-0.6,2.4 -2.6,1.6 M3,6.5 H9.5" fill="none" stroke="#d0d0d0" stroke-width="1.3"/><path d="M9,8 L14.5,14 M14.5,8 L9,14" stroke="#d0d0d0" stroke-width="1.2"/><path d="M15,14.5 h3 l-1.5,2Z" fill="#d0d0d0"/></svg><svg class="a" style="left:1564px;top:484.1px;" width="17" height="5" viewBox="0 0 17 5"><circle cx="2.3" cy="2.5" r="2" fill="#d0d0d0"/><circle cx="8.4" cy="2.5" r="2" fill="#d0d0d0"/><circle cx="14.5" cy="2.5" r="2" fill="#d0d0d0"/></svg><div class="a" style="left:1316px;top:497.5px;width:272px;height:1px;background:#4c4c4c;"></div><div class="a t" style="left:1326.7px;top:511.29999999999995px;font-size:12px;color:#d4d4d4;transform:scaleX(0.9180);transform-origin:0 0;">Align</div><svg class="a" style="left:1331px;top:546px;" width="17" height="17" viewBox="0 0 17 17"><rect x="1.7" y="1.7" width="13.6" height="13.6" fill="none" stroke="#a8a8a8" stroke-width="1"/><rect x="0.19999999999999996" y="0.19999999999999996" width="3" height="3" fill="#dcdcdc"/><rect x="7.0" y="0.19999999999999996" width="3" height="3" fill="#dcdcdc"/><rect x="13.8" y="0.19999999999999996" width="3" height="3" fill="#dcdcdc"/><rect x="0.19999999999999996" y="7.0" width="3" height="3" fill="#dcdcdc"/><rect x="13.8" y="7.0" width="3" height="3" fill="#dcdcdc"/><rect x="0.19999999999999996" y="13.8" width="3" height="3" fill="#dcdcdc"/><rect x="7.0" y="13.8" width="3" height="3" fill="#dcdcdc"/><rect x="13.8" y="13.8" width="3" height="3" fill="#dcdcdc"/><rect x="7.0" y="7.0" width="3" height="3" fill="#dcdcdc"/></svg><svg class="a" style="left:1349.8999999999999px;top:552.8000000000001px;" width="9.4" height="5.6" viewBox="0 0 9.4 5.6"><polyline points="1,1 4.7,4.6 8.4,1" fill="none" stroke="#d0d0d0" stroke-width="1.2" stroke-linecap="round" stroke-linejoin="round"/></svg><svg class="a" style="left:1373.2px;top:543.6px;" width="21" height="21" viewBox="0 0 21 21"><rect x="0" y="0" width="1.7" height="21" fill="#cbcbcb"/><rect x="3" y="2.6" width="9.4" height="6" fill="#cbcbcb"/><rect x="3" y="11.8" width="14.8" height="5.8" fill="#cbcbcb"/></svg><svg class="a" style="left:1406.6px;top:543.6px;" width="21" height="21" viewBox="0 0 21 21"><rect x="9.6" y="0" width="1.7" height="21" fill="#cbcbcb"/><rect x="5.1" y="2.6" width="10.7" height="6" fill="#cbcbcb"/><rect x="2.6" y="11.8" width="15.8" height="5.8" fill="#cbcbcb"/></svg><svg class="a" style="left:1442px;top:543.6px;" width="21" height="21" viewBox="0 0 21 21"><rect x="19.2" y="0" width="1.7" height="21" fill="#cbcbcb"/><rect x="8.8" y="2.6" width="9.4" height="6" fill="#cbcbcb"/><rect x="3" y="11.8" width="15.2" height="5.8" fill="#cbcbcb"/></svg><svg class="a" style="left:1476px;top:543.6px;" width="21" height="21" viewBox="0 0 21 21"><rect x="0" y="1" width="21" height="1.6" fill="#cbcbcb"/><rect x="3.2" y="3.5" width="6" height="15" fill="#cbcbcb"/><rect x="11.6" y="3.5" width="6.6" height="9.5" fill="#cbcbcb"/></svg><svg class="a" style="left:1510.8px;top:543.6px;" width="21" height="21" viewBox="0 0 21 21"><rect x="0" y="9.2" width="21" height="1.6" fill="#cbcbcb"/><rect x="3.8" y="2.2" width="5.8" height="15.2" fill="#cbcbcb"/><rect x="12.2" y="4.6" width="6.6" height="10.6" fill="#cbcbcb"/></svg><svg class="a" style="left:1545px;top:543.6px;" width="21" height="21" viewBox="0 0 21 21"><rect x="0" y="18.4" width="21" height="1.7" fill="#cbcbcb"/><rect x="3.8" y="2.2" width="6" height="15.4" fill="#cbcbcb"/><rect x="12" y="8" width="6.6" height="9.6" fill="#cbcbcb"/></svg><svg class="a" style="left:1564px;top:580.8px;" width="17" height="5" viewBox="0 0 17 5"><circle cx="2.3" cy="2.5" r="2" fill="#d0d0d0"/><circle cx="8.4" cy="2.5" r="2" fill="#d0d0d0"/><circle cx="14.5" cy="2.5" r="2" fill="#d0d0d0"/></svg><div class="a" style="left:1316px;top:594.3px;width:272px;height:1px;background:#4c4c4c;"></div><div class="a t" style="left:1327px;top:608.5px;font-size:12px;color:#d4d4d4;transform:scaleX(0.9323);transform-origin:0 0;">Pathfinder</div><svg class="a" style="left:1333px;top:642px;" width="18" height="18" viewBox="0 0 18 18"><path d="M1,1 H11 V5 H16.5 V16.5 H5 V11 H1 Z" fill="#cdcdcd"/></svg><svg class="a" style="left:1368.5px;top:642px;" width="18" height="18" viewBox="0 0 18 18"><rect x="1" y="1" width="10" height="10" fill="#cdcdcd"/><rect x="6" y="6" width="10.5" height="10.5" fill="#535353" stroke="#cdcdcd" stroke-width="1.3"/></svg><svg class="a" style="left:1404px;top:642px;" width="18" height="18" viewBox="0 0 18 18"><rect x="1.6" y="1.6" width="10" height="10" fill="none" stroke="#cdcdcd" stroke-width="1.3"/><rect x="6" y="6" width="10.5" height="10.5" fill="none" stroke="#cdcdcd" stroke-width="1.3"/><rect x="6.6" y="6.6" width="5" height="5" fill="#cdcdcd"/></svg><svg class="a" style="left:1440px;top:642px;" width="18" height="18" viewBox="0 0 18 18"><rect x="1" y="1" width="11" height="11" fill="#cdcdcd"/><rect x="6" y="6" width="11" height="11" fill="#cdcdcd"/><rect x="6.6" y="6.6" width="4.8" height="4.8" fill="#535353"/></svg><div class="a" style="left:1512.7px;top:631.4px;width:72.6px;height:23.5px;background:#595959;border-radius:2px;"></div><div class="a t" style="left:1530.6px;top:635.8px;font-size:12px;color:#6e6e6e;transform:scaleX(0.8992);transform-origin:0 0;">Expand</div><svg class="a" style="left:1564px;top:665.5px;" width="17" height="5" viewBox="0 0 17 5"><circle cx="2.3" cy="2.5" r="2" fill="#d0d0d0"/><circle cx="8.4" cy="2.5" r="2" fill="#d0d0d0"/><circle cx="14.5" cy="2.5" r="2" fill="#d0d0d0"/></svg><div class="a" style="left:1316px;top:681px;width:272px;height:1px;background:#4c4c4c;"></div><div class="a t" style="left:1327px;top:701.3px;font-size:12px;color:#d4d4d4;transform:scaleX(0.9298);transform-origin:0 0;">Quick Actions</div><div class="a" style="left:1327px;top:728.6px;width:124px;height:24px;border:1px solid #6c6c6c;box-sizing:border-box;border-radius:2px;"></div><div class="a t" style="left:1360.8px;top:733.2px;font-size:12px;color:#ececec;transform:scaleX(0.9413);transform-origin:0 0;">Offset Path</div><div class="a" style="left:1463.3px;top:728.6px;width:123px;height:24px;border:1px solid #6c6c6c;box-sizing:border-box;border-radius:2px;"></div><div class="a t" style="left:1503.4px;top:733.2px;font-size:12px;color:#ececec;transform:scaleX(0.9363);transform-origin:0 0;">Ungroup</div><div class="a" style="left:1327px;top:764px;width:259.3px;height:24px;border:1px solid #6c6c6c;box-sizing:border-box;border-radius:2px;"></div><div class="a t" style="left:1438.1px;top:768.7px;font-size:12px;color:#ececec;transform:scaleX(0.9188);transform-origin:0 0;">Recolor</div><div class="a" style="left:48px;top:882.6px;width:1220px;height:18.4px;background:#494949;"></div><div class="a" style="left:1248px;top:882.6px;width:18px;height:18.4px;background:#4f4f4f;"></div><div class="a" style="left:48px;top:882.6px;width:168px;height:18.4px;background:#3e3e3e;"></div><div class="a" style="left:53px;top:883px;width:78px;height:18px;background:#454545;border:1px solid #5a5a5a;border-bottom:none;box-sizing:border-box;"></div><div class="a t" style="left:55px;top:886px;font-size:12px;color:#e6e6e6;transform:scaleX(1.0070);transform-origin:0 0;">50%</div><div class="a" style="left:109.6px;top:884px;width:1px;height:17px;background:#5a5a5a;"></div><svg class="a" style="left:115.3px;top:890.75px;" width="9" height="5.5" viewBox="0 0 9 5.5"><polyline points="1,1 4.5,4.5 8,1" fill="none" stroke="#e0e0e0" stroke-width="1.6" stroke-linecap="round" stroke-linejoin="round"/></svg><div class="a" style="left:135.4px;top:883px;width:78.4px;height:18px;background:#454545;border:1px solid #5a5a5a;border-bottom:none;box-sizing:border-box;"></div><div class="a t" style="left:138.8px;top:886px;font-size:12px;color:#e6e6e6;transform:scaleX(1.0101);transform-origin:0 0;">0°</div><div class="a" style="left:194px;top:884px;width:1px;height:17px;background:#5a5a5a;"></div><svg class="a" style="left:198.7px;top:890.75px;" width="9" height="5.5" viewBox="0 0 9 5.5"><polyline points="1,1 4.5,4.5 8,1" fill="none" stroke="#e0e0e0" stroke-width="1.6" stroke-linecap="round" stroke-linejoin="round"/></svg><svg class="a" style="left:223px;top:888px;" width="14" height="11" viewBox="0 0 14 11"><rect x="1" y="0.5" width="1.6" height="10" fill="#6a6a6a"/><path d="M10,0.5 L4,5.5 L10,10.5 Z" fill="#6a6a6a"/></svg><svg class="a" style="left:245px;top:888px;" width="8" height="11" viewBox="0 0 8 11"><path d="M7,0.5 L1,5.5 L7,10.5 Z" fill="#6a6a6a"/></svg><div class="a" style="left:261px;top:883px;width:70px;height:18px;background:#454545;"></div><div class="a t" style="left:265.5px;top:886px;font-size:12px;color:#e6e6e6;">1</div><div class="a" style="left:307px;top:883px;width:1px;height:18px;background:#3c3c3c;"></div><svg class="a" style="left:313.7px;top:890.75px;" width="9" height="5.5" viewBox="0 0 9 5.5"><polyline points="1,1 4.5,4.5 8,1" fill="none" stroke="#e0e0e0" stroke-width="1.6" stroke-linecap="round" stroke-linejoin="round"/></svg><svg class="a" style="left:340px;top:888px;" width="8" height="11" viewBox="0 0 8 11"><path d="M1,0.5 L7,5.5 L1,10.5 Z" fill="#6a6a6a"/></svg><svg class="a" style="left:356px;top:888px;" width="14" height="11" viewBox="0 0 14 11"><path d="M3,0.5 L9,5.5 L3,10.5 Z" fill="#6a6a6a"/><rect x="10.4" y="0.5" width="1.6" height="10" fill="#6a6a6a"/></svg><div class="a" style="left:378px;top:883px;width:1px;height:18px;background:#3c3c3c;"></div><div class="a t" style="left:435.4px;top:886px;font-size:12px;color:#c8c8c8;transform:scaleX(0.9305);transform-origin:0 0;">Toggle Direct Selection</div><svg class="a" style="left:614.5px;top:888px;" width="8" height="11" viewBox="0 0 8 11"><path d="M1,0.5 L7,5.5 L1,10.5 Z" fill="#d0d0d0"/></svg><div class="a" style="left:627px;top:883px;width:1px;height:18px;background:#3c3c3c;"></div><div class="a" style="left:845.5px;top:884px;width:28.5px;height:15.5px;background:#5e5e5e;border-radius:7.5px;"></div><svg class="a" style="left:1216.5px;top:888px;" width="6" height="9" viewBox="0 0 6 9"><polyline points="5,1 1,4.5 5,8" fill="none" stroke="#8a8a8a" stroke-width="1.2"/></svg><svg class="a" style="left:1235px;top:888px;" width="6" height="9" viewBox="0 0 6 9"><polyline points="1,1 5,4.5 1,8" fill="none" stroke="#8a8a8a" stroke-width="1.2"/></svg></body></html>
